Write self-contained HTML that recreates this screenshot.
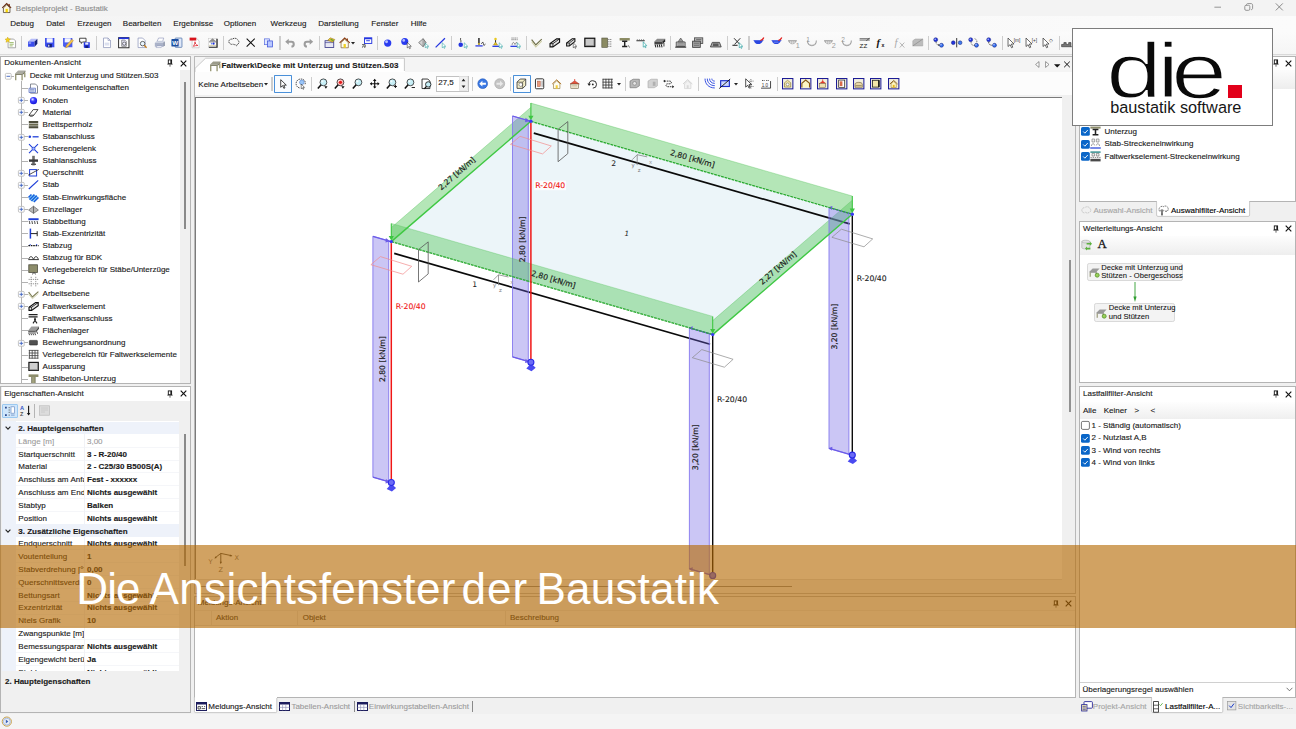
<!DOCTYPE html><html lang='de'><head><meta charset='utf-8'><title>Beispielprojekt - Baustatik</title><style>
*{box-sizing:border-box;margin:0;padding:0}
html,body{width:1296px;height:729px;overflow:hidden;background:#f0f0f0}
body{font-family:"Liberation Sans",sans-serif;font-size:8px;color:#1a1a1a;position:relative;line-height:1}
.a{position:absolute}
.t{position:absolute;white-space:nowrap;line-height:10px;height:10px;-webkit-text-stroke:.13px}
.b{font-weight:700}
.g{color:#9a9a9a;-webkit-text-stroke:.1px}
.pn{position:absolute;background:#fff;border:1px solid #b4b4b4}
.hd{position:absolute;left:0;right:0;top:0;height:14px;background:#fff}
svg{position:absolute;overflow:visible}
</style></head><body>
<div class='a' style='left:0px;top:0px;width:1296px;height:15.5px;background:#f3f3f3;'></div>
<svg style='left:2.4px;top:2.6px' width='9.4' height='10.3' viewBox='0 0 10 11'><path d='M0.3 5.2L5 0.6l4.7 4.6' fill='none' stroke='#6a2d10' stroke-width='1.2'/><path d='M1.5 5.2L5 1.9l3.5 3.3v5h-7z' fill='#fdf6dc' stroke='#4a3a2a' stroke-width='.8'/><rect x='3.8' y='6.3' width='2.4' height='3.6' fill='#f5d400'/><rect x='7' y='1' width='1.3' height='2.4' fill='#7a2d10'/></svg>
<div class='t ' style='left:15.8px;top:3.65px;color:#8e8e8e'>Beispielprojekt - Baustatik</div>
<svg style='left:1210px;top:3px' width='80' height='10' viewBox='0 0 80 10'><path d='M4.400 4.200h6.600' stroke='#8a8a8a' stroke-width='.9'/><rect x='34.800' y='2.300' width='5' height='5' rx='1.200' fill='none' stroke='#8a8a8a' stroke-width='.9'/><path d='M36.400 2.200c0-1.200.6-1.600 1.600-1.600h3c1 0 1.600.6 1.600 1.600v3c0 1-.6 1.400-1.600 1.500' fill='none' stroke='#8a8a8a' stroke-width='.9'/><path d='M65.800 .4l7 7M72.800 .4l-7 7' stroke='#777' stroke-width='.85'/></svg>
<div class='a' style='left:0px;top:15.5px;width:1296px;height:16.5px;background:linear-gradient(90deg,#f4f4f4,#fbfbfb);'></div>
<div class='t ' style='left:10.3px;top:18.95px;'>Debug</div>
<div class='t ' style='left:46.2px;top:18.95px;'>Datei</div>
<div class='t ' style='left:77.3px;top:18.95px;'>Erzeugen</div>
<div class='t ' style='left:122.8px;top:18.95px;'>Bearbeiten</div>
<div class='t ' style='left:173.3px;top:18.95px;'>Ergebnisse</div>
<div class='t ' style='left:223.8px;top:18.95px;'>Optionen</div>
<div class='t ' style='left:270.5px;top:18.95px;'>Werkzeug</div>
<div class='t ' style='left:318.3px;top:18.95px;'>Darstellung</div>
<div class='t ' style='left:371.3px;top:18.95px;'>Fenster</div>
<div class='t ' style='left:410.7px;top:18.95px;'>Hilfe</div>
<div class='a' style='left:0px;top:32px;width:1296px;height:23px;background:linear-gradient(#fbfbfb,#f5f5f5);'></div>
<div class='a' style='left:0px;top:54.2px;width:1296px;height:0.9px;background:#d9d9d9;'></div>
<div class='a' style='left:0px;top:714px;width:1296px;height:15px;background:#f4f4f4;'></div>
<div class='pn' style='left:0px;top:55.5px;width:191px;height:328px'></div>
<div class='t ' style='left:4.2px;top:58.25px;letter-spacing:.15px'>Dokumenten-Ansicht</div>
<svg style='left:167.30px;top:59.30px' width='6' height='8' viewBox='0 0 6 8'><rect x='1.300' y='.9' width='3.300' height='3.800' fill='#fff' stroke='#111' stroke-width='.9'/><path d='M4 1v3.600' stroke='#111' stroke-width='1.200'/><path d='M.3 5.200h5.400' stroke='#444' stroke-width='.8'/><path d='M3 5.400v2.300' stroke='#555' stroke-width='.9'/></svg>
<svg style='left:179.90px;top:59.60px' width='7' height='7' viewBox='0 0 7 7'><path d='M.7 .7l5.600 5.600M6.300 .7L.7 6.300' stroke='#111' stroke-width='1.150' fill='none'/></svg>
<div class='a' style='left:179.5px;top:70px;width:10.5px;height:312.5px;background:#f0f0f0;'></div>
<div class='a' style='left:184.3px;top:81.5px;width:1.8px;height:147px;background:#8a8a8a;'></div>
<div class='a' style='left:1.5px;top:69px;width:178px;height:313.5px;overflow:hidden'><div class='a' style='left:-1.5px;top:-69px;width:200px;height:400px'>
<svg style='left:0;top:0' width='60' height='400' viewBox='0 0 60 400'><path d='M21.5 80.9V395' stroke='#b2b2b2' stroke-width='1'/>
<path d='M21.5 88.5H28' stroke='#b2b2b2' stroke-width='1'/>
<path d='M21.5 100.5H28' stroke='#b2b2b2' stroke-width='1'/>
<path d='M21.5 112.5H28' stroke='#b2b2b2' stroke-width='1'/>
<path d='M21.5 124.5H28' stroke='#b2b2b2' stroke-width='1'/>
<path d='M21.5 136.5H28' stroke='#b2b2b2' stroke-width='1'/>
<path d='M21.5 149.5H28' stroke='#b2b2b2' stroke-width='1'/>
<path d='M21.5 161.5H28' stroke='#b2b2b2' stroke-width='1'/>
<path d='M21.5 173.5H28' stroke='#b2b2b2' stroke-width='1'/>
<path d='M21.5 185.5H28' stroke='#b2b2b2' stroke-width='1'/>
<path d='M21.5 197.5H28' stroke='#b2b2b2' stroke-width='1'/>
<path d='M21.5 209.5H28' stroke='#b2b2b2' stroke-width='1'/>
<path d='M21.5 221.5H28' stroke='#b2b2b2' stroke-width='1'/>
<path d='M21.5 233.5H28' stroke='#b2b2b2' stroke-width='1'/>
<path d='M21.5 246.5H28' stroke='#b2b2b2' stroke-width='1'/>
<path d='M21.5 258.5H28' stroke='#b2b2b2' stroke-width='1'/>
<path d='M21.5 270.5H28' stroke='#b2b2b2' stroke-width='1'/>
<path d='M21.5 282.5H28' stroke='#b2b2b2' stroke-width='1'/>
<path d='M21.5 294.5H28' stroke='#b2b2b2' stroke-width='1'/>
<path d='M21.5 306.5H28' stroke='#b2b2b2' stroke-width='1'/>
<path d='M21.5 318.5H28' stroke='#b2b2b2' stroke-width='1'/>
<path d='M21.5 330.5H28' stroke='#b2b2b2' stroke-width='1'/>
<path d='M21.5 342.5H28' stroke='#b2b2b2' stroke-width='1'/>
<path d='M21.5 355.5H28' stroke='#b2b2b2' stroke-width='1'/>
<path d='M21.5 367.5H28' stroke='#b2b2b2' stroke-width='1'/>
<path d='M21.5 379.5H28' stroke='#b2b2b2' stroke-width='1'/>
<path d='M11 76.5H14' stroke='#b2b2b2' stroke-width='1'/></svg>
<svg style='left:4.90px;top:73.20px' width='6.6' height='6.6' viewBox='0 0 6.6 6.6'><rect x='.4' y='.4' width='5.800' height='5.800' rx='1' fill='#fff' stroke='#b0b0b0' stroke-width='.75'/><path d='M1.500 3.300h3.600' stroke='#3a5fc0' stroke-width='.9'/></svg>
<svg style='left:13.60px;top:69.30px' width='12' height='12' viewBox='0 0 11 11'><path d='M1 4.2L3.8 1.4H10.4L8 4.2z' fill='#ababa2'/><path d='M1 4.2H8V5.4H1z' fill='#77775f'/><path d='M8 4.2L10.4 1.4V2.6L8 5.4z' fill='#5f5f4c'/><path d='M1.6 5.4V10.2M7.4 5.4V10.2M9.9 3.2V7.6' stroke='#8a8a62' stroke-width='1.1'/></svg>
<div class='t ' style='left:29.7px;top:71.35px;letter-spacing:-.09px'>Decke mit Unterzug und Stützen.S03</div>
<svg style='left:28.10px;top:82.52px' width='11' height='11' viewBox='0 0 11 11'><path d='M2.5 1h5l2 2v7.2h-7z' fill='#fff' stroke='#6a6f7a' stroke-width='.8'/><path d='M1 5.2h6.5v4.3H1z' fill='#dfe6f6' stroke='#5a6fc0' stroke-width='.75'/><path d='M2 6.6h4.4M2 8h4.4' stroke='#5a6fb0' stroke-width='.6'/></svg>
<div class='t ' style='left:42.6px;top:83.47px;'>Dokumenteigenschaften</div>
<svg style='left:18.00px;top:97.24px' width='6.6' height='6.6' viewBox='0 0 6.6 6.6'><rect x='.4' y='.4' width='5.800' height='5.800' rx='1' fill='#fff' stroke='#b0b0b0' stroke-width='.75'/><path d='M1.500 3.300h3.600M3.300 1.500v3.600' stroke='#3a5fc0' stroke-width='.9'/></svg>
<svg style='left:28.10px;top:94.64px' width='11' height='11' viewBox='0 0 11 11'><defs><radialGradient id='kg' cx='.38' cy='.32' r='.7'><stop offset='0' stop-color='#e6e9ff'/><stop offset='.4' stop-color='#3c40ff'/><stop offset='1' stop-color='#1414d8'/></radialGradient></defs><circle cx='5.5' cy='5.7' r='3.6' fill='url(#kg)'/></svg>
<div class='t ' style='left:42.6px;top:95.59px;'>Knoten</div>
<svg style='left:18.00px;top:109.35px' width='6.6' height='6.6' viewBox='0 0 6.6 6.6'><rect x='.4' y='.4' width='5.800' height='5.800' rx='1' fill='#fff' stroke='#b0b0b0' stroke-width='.75'/><path d='M1.500 3.300h3.600M3.300 1.500v3.600' stroke='#3a5fc0' stroke-width='.9'/></svg>
<svg style='left:28.10px;top:106.75px' width='11' height='11' viewBox='0 0 11 11'><path d='M1 8.2L5.2 2.6H10L5.8 8.2z' fill='#fff' stroke='#222' stroke-width='.8'/><path d='M1 8.2c.4 1.4 3.6 1.6 4.8 0' fill='none' stroke='#222' stroke-width='.8'/></svg>
<div class='t ' style='left:42.6px;top:107.70px;'>Material</div>
<svg style='left:28.10px;top:118.87px' width='11' height='11' viewBox='0 0 11 11'><rect x='.8' y='2' width='9.4' height='2.1' fill='#4e4e3c'/><rect x='.8' y='4.6' width='9.4' height='2.1' fill='#6a6a50'/><rect x='.8' y='7.2' width='9.4' height='2.1' fill='#4e4e3c'/></svg>
<div class='t ' style='left:42.6px;top:119.82px;'>Brettsperrholz</div>
<svg style='left:18.00px;top:133.59px' width='6.6' height='6.6' viewBox='0 0 6.6 6.6'><rect x='.4' y='.4' width='5.800' height='5.800' rx='1' fill='#fff' stroke='#b0b0b0' stroke-width='.75'/><path d='M1.500 3.300h3.600M3.300 1.500v3.600' stroke='#3a5fc0' stroke-width='.9'/></svg>
<svg style='left:28.10px;top:130.99px' width='11' height='11' viewBox='0 0 11 11'><circle cx='1.8' cy='5.8' r='1.3' fill='#1f3fd8'/><path d='M4.6 5.8h6' stroke='#1f3fd8' stroke-width='1.3'/></svg>
<div class='t ' style='left:42.6px;top:131.94px;'>Stabanschluss</div>
<svg style='left:28.10px;top:143.11px' width='11' height='11' viewBox='0 0 11 11'><path d='M1 1.2l9 9M10 1.2l-9 9' stroke='#1f3fd8' stroke-width='1.1'/><circle cx='5.5' cy='5.7' r='1.5' fill='#9db2ff' stroke='#1f3fd8' stroke-width='.6'/></svg>
<div class='t ' style='left:42.6px;top:144.06px;'>Scherengelenk</div>
<svg style='left:28.10px;top:155.23px' width='11' height='11' viewBox='0 0 11 11'><rect x='4.2' y='.8' width='2.6' height='9.6' fill='#6d6d6d'/><rect x='1' y='4.4' width='9' height='2.4' fill='#3a3a3a'/><rect x='3' y='8.6' width='5' height='1.4' fill='#555'/></svg>
<div class='t ' style='left:42.6px;top:156.18px;'>Stahlanschluss</div>
<svg style='left:18.00px;top:169.94px' width='6.6' height='6.6' viewBox='0 0 6.6 6.6'><rect x='.4' y='.4' width='5.800' height='5.800' rx='1' fill='#fff' stroke='#b0b0b0' stroke-width='.75'/><path d='M1.500 3.300h3.600M3.300 1.500v3.600' stroke='#3a5fc0' stroke-width='.9'/></svg>
<svg style='left:28.10px;top:167.34px' width='11' height='11' viewBox='0 0 11 11'><rect x='1.6' y='2.6' width='7' height='6.4' fill='#fff' stroke='#1f3fd8' stroke-width='1'/><path d='M.2 8.2L10.8 2.4' stroke='#222' stroke-width='.8'/></svg>
<div class='t ' style='left:42.6px;top:168.29px;'>Querschnitt</div>
<svg style='left:18.00px;top:182.06px' width='6.6' height='6.6' viewBox='0 0 6.6 6.6'><rect x='.4' y='.4' width='5.800' height='5.800' rx='1' fill='#fff' stroke='#b0b0b0' stroke-width='.75'/><path d='M1.500 3.300h3.600M3.300 1.500v3.600' stroke='#3a5fc0' stroke-width='.9'/></svg>
<svg style='left:28.10px;top:179.46px' width='11' height='11' viewBox='0 0 11 11'><path d='M.8 10L10.2 1.4' stroke='#1f3fd8' stroke-width='1.2'/></svg>
<div class='t ' style='left:42.6px;top:180.41px;'>Stab</div>
<svg style='left:28.10px;top:191.58px' width='11' height='11' viewBox='0 0 11 11'><path d='M.5 5.5l3-3M1.5 7.6l5-5M3.4 9l5.4-5.4M5.8 10l4.6-4.6' stroke='#1a5fe0' stroke-width='1.7'/><path d='M1 6.6l4-4M2.6 8.4l5-5M4.6 9.6l5-5' stroke='#35c3e8' stroke-width='.6'/></svg>
<div class='t ' style='left:42.6px;top:192.53px;'>Stab-Einwirkungsfläche</div>
<svg style='left:18.00px;top:206.30px' width='6.6' height='6.6' viewBox='0 0 6.6 6.6'><rect x='.4' y='.4' width='5.800' height='5.800' rx='1' fill='#fff' stroke='#b0b0b0' stroke-width='.75'/><path d='M1.500 3.300h3.600M3.300 1.500v3.600' stroke='#3a5fc0' stroke-width='.9'/></svg>
<svg style='left:28.10px;top:203.70px' width='11' height='11' viewBox='0 0 11 11'><path d='M.6 6L5.5 2.2 10.4 6 5.5 9.4z' fill='#b9b9b9' stroke='#666' stroke-width='.7'/><path d='M5.5 2.2V9.4' stroke='#555' stroke-width='.8'/></svg>
<div class='t ' style='left:42.6px;top:204.65px;'>Einzellager</div>
<svg style='left:28.10px;top:215.82px' width='11' height='11' viewBox='0 0 11 11'><path d='M.4 3.2h10.2' stroke='#1f3fd8' stroke-width='1.9'/><path d='M1.6 5c-1 1.2 1 1.6 0 3M4.2 5c-1 1.2 1 1.6 0 3M6.8 5c-1 1.2 1 1.6 0 3M9.4 5c-1 1.2 1 1.6 0 3' fill='none' stroke='#222' stroke-width='.9'/></svg>
<div class='t ' style='left:42.6px;top:216.77px;'>Stabbettung</div>
<svg style='left:28.10px;top:227.93px' width='11' height='11' viewBox='0 0 11 11'><path d='M2.4 .6v10' stroke='#1f3fd8' stroke-width='1.5'/><path d='M2.8 5.6h6.4M9.2 3.2v5' stroke='#222' stroke-width='1'/></svg>
<div class='t ' style='left:42.6px;top:228.88px;'>Stab-Exzentrizität</div>
<svg style='left:28.10px;top:240.05px' width='11' height='11' viewBox='0 0 11 11'><path d='M.4 5.6h10.2' stroke='#111' stroke-width='1.3' stroke-dasharray='1.6 .8'/><path d='M2.2 4.2v1M8.6 4.2v1' stroke='#1f3fd8' stroke-width='1.2'/></svg>
<div class='t ' style='left:42.6px;top:241.00px;'>Stabzug</div>
<svg style='left:28.10px;top:252.17px' width='11' height='11' viewBox='0 0 11 11'><path d='M.8 7.4c.4-3.6 4-3.6 4.4 0M5.8 7.4c.4-3.6 4-3.6 4.4 0M.4 7.6h10.4' fill='none' stroke='#222' stroke-width='.9'/></svg>
<div class='t ' style='left:42.6px;top:253.12px;'>Stabzug für BDK</div>
<svg style='left:28.10px;top:264.29px' width='11' height='11' viewBox='0 0 11 11'><rect x='.8' y='.8' width='8.6' height='7.6' fill='#8c8c6a' stroke='#4a4a3a' stroke-width='.8'/><path d='M4 10.4l2-1.8 2 1.8' fill='none' stroke='#333' stroke-width='.8'/></svg>
<div class='t ' style='left:42.6px;top:265.24px;'>Verlegebereich für Stäbe/Unterzüge</div>
<svg style='left:28.10px;top:276.41px' width='11' height='11' viewBox='0 0 11 11'><path d='M3.2 .8v9.6M7.8 .8v9.6M.6 3.4h9.8M.6 7.8h9.8' stroke='#8a8a8a' stroke-width='.9' stroke-dasharray='1.2 .9'/></svg>
<div class='t ' style='left:42.6px;top:277.36px;'>Achse</div>
<svg style='left:18.00px;top:291.12px' width='6.6' height='6.6' viewBox='0 0 6.6 6.6'><rect x='.4' y='.4' width='5.800' height='5.800' rx='1' fill='#fff' stroke='#b0b0b0' stroke-width='.75'/><path d='M1.500 3.300h3.600M3.300 1.500v3.600' stroke='#3a5fc0' stroke-width='.9'/></svg>
<svg style='left:28.10px;top:288.52px' width='11' height='11' viewBox='0 0 11 11'><path d='M.6 3.2L4.4 8 10.4 2.6' fill='none' stroke='#7d7d55' stroke-width='1.2'/><path d='M.6 5L4.4 9.8 10.4 4.4' fill='none' stroke='#c9c9a4' stroke-width='.9'/></svg>
<div class='t ' style='left:42.6px;top:289.47px;'>Arbeitsebene</div>
<svg style='left:18.00px;top:303.24px' width='6.6' height='6.6' viewBox='0 0 6.6 6.6'><rect x='.4' y='.4' width='5.800' height='5.800' rx='1' fill='#fff' stroke='#b0b0b0' stroke-width='.75'/><path d='M1.500 3.300h3.600M3.300 1.500v3.600' stroke='#3a5fc0' stroke-width='.9'/></svg>
<svg style='left:28.10px;top:300.64px' width='11' height='11' viewBox='0 0 11 11'><path d='M1 9.4V6.2L7.6 1.6h2.6V4.8L3.6 9.4z' fill='#e9e9e9' stroke='#111' stroke-width='1.1'/><path d='M1 6.2h2.6V9.4M3.6 6.2L10.2 1.6' fill='none' stroke='#111' stroke-width='.8'/></svg>
<div class='t ' style='left:42.6px;top:301.59px;'>Faltwerkselement</div>
<svg style='left:28.10px;top:312.76px' width='11' height='11' viewBox='0 0 11 11'><path d='M.6 1.6h9M.6 3.8h9' stroke='#222' stroke-width='1.2'/><path d='M7 4.4v3M5 10.4l2-3 2 3' fill='none' stroke='#222' stroke-width='1.1'/><circle cx='7' cy='6.6' r='1' fill='#222'/></svg>
<div class='t ' style='left:42.6px;top:313.71px;'>Faltwerksanschluss</div>
<svg style='left:28.10px;top:324.88px' width='11' height='11' viewBox='0 0 11 11'><path d='M.2 5.4L3.4 1.6H11L7.8 5.4z' fill='#9d9d9d'/><path d='M.2 5.4H7.8V7.6H.2z' fill='#666'/><path d='M7.8 5.4L11 1.600V3.800L7.8 7.600z' fill='#4a4a4a'/><path d='M.8 8l.8 2.200M2.800 8l.8 2.200M4.800 8l.8 2.200M6.800 8l.8 2.200M8.800 6.600l.8 2.200' stroke='#333' stroke-width='.9'/></svg>
<div class='t ' style='left:42.6px;top:325.83px;'>Flächenlager</div>
<svg style='left:18.00px;top:339.60px' width='6.6' height='6.6' viewBox='0 0 6.6 6.6'><rect x='.4' y='.4' width='5.800' height='5.800' rx='1' fill='#fff' stroke='#b0b0b0' stroke-width='.75'/><path d='M1.500 3.300h3.600M3.300 1.500v3.600' stroke='#3a5fc0' stroke-width='.9'/></svg>
<svg style='left:28.10px;top:337.00px' width='11' height='11' viewBox='0 0 11 11'><rect x='1.4' y='3.4' width='8' height='4.6' rx='.6' fill='#505050' stroke='#2a2a2a' stroke-width='.6'/></svg>
<div class='t ' style='left:42.6px;top:337.95px;'>Bewehrungsanordnung</div>
<svg style='left:28.10px;top:349.11px' width='11' height='11' viewBox='0 0 11 11'><path d='M.8 1.4h9.6M.8 4h9.6M.8 6.6h9.6M.8 9.2h9.6M1.4 1v8.6M4.2 1v8.6M7 1v8.6M9.8 1v8.6' stroke='#4a4a4a' stroke-width='.85'/></svg>
<div class='t ' style='left:42.6px;top:350.06px;'>Verlegebereich für Faltwerkselemente</div>
<svg style='left:28.10px;top:361.23px' width='11' height='11' viewBox='0 0 11 11'><rect x='.9' y='1.4' width='9.4' height='8' fill='#cfcfcf' stroke='#1a1a1a' stroke-width='1.2'/><path d='M1.6 8.8L9.6 8.8 9.6 2.2' fill='none' stroke='#888' stroke-width='.7'/></svg>
<div class='t ' style='left:42.6px;top:362.18px;'>Aussparung</div>
<svg style='left:28.10px;top:373.35px' width='11' height='11' viewBox='0 0 11 11'><rect x='.6' y='1.4' width='9.8' height='2.6' fill='#8c8c6a'/><rect x='3.6' y='4' width='3.6' height='6.4' fill='#a2a27e'/><path d='M3.6 4v6.4M7.2 4v6.4' stroke='#55553f' stroke-width='.6'/></svg>
<div class='t ' style='left:42.6px;top:374.30px;'>Stahlbeton-Unterzug</div>
</div></div>
<div class='pn' style='left:0px;top:386px;width:191px;height:327px;background:#f0f0f0'></div>
<div class='a' style='left:1.5px;top:387px;width:188.5px;height:14px;background:#fff;'></div>
<div class='t ' style='left:4.2px;top:389.05px;'>Eigenschaften-Ansicht</div>
<svg style='left:167.30px;top:390.10px' width='6' height='8' viewBox='0 0 6 8'><rect x='1.300' y='.9' width='3.300' height='3.800' fill='#fff' stroke='#111' stroke-width='.9'/><path d='M4 1v3.600' stroke='#111' stroke-width='1.200'/><path d='M.3 5.200h5.400' stroke='#444' stroke-width='.8'/><path d='M3 5.400v2.300' stroke='#555' stroke-width='.9'/></svg>
<svg style='left:179.90px;top:390.40px' width='7' height='7' viewBox='0 0 7 7'><path d='M.7 .7l5.600 5.600M6.300 .7L.7 6.300' stroke='#111' stroke-width='1.150' fill='none'/></svg>
<div class='a' style='left:1.5px;top:401px;width:188.5px;height:20px;background:#f0f0f0;'></div>
<div class='a' style='left:2px;top:404px;width:15.5px;height:13.5px;background:#cfe6fb;border:.6px solid #9cc9f0;border-radius:1px'></div>
<svg style='left:4px;top:405.5px' width='12' height='11' viewBox='0 0 12 11'><path d='M1 .8h1.8v1.8H1zM1 8.2h1.8V10H1z' fill='#2b4a8f'/><path d='M4.6 1.7h1.2M4.6 4h1.2M4.6 6.3h1.2M4.6 9.1h1.2' stroke='#444' stroke-width='.8'/><rect x='7' y='.8' width='3.6' height='6.4' fill='#fff' stroke='#6d8fc4' stroke-width='.7'/><path d='M7 9.1h3.6' stroke='#6d8fc4' stroke-width='.8'/></svg>
<svg style='left:19.5px;top:405px' width='12' height='12' viewBox='0 0 12 12'><text x='0' y='5.2' font-family='Liberation Sans' font-size='5.6' fill='#2b55c8' font-weight='700'>A</text><text x='0' y='10.8' font-family='Liberation Sans' font-size='5.6' fill='#555' font-weight='700'>Z</text><path d='M8.6 .8v9' stroke='#111' stroke-width='1.1'/><path d='M6.9 8l1.7 2.6L10.3 8z' fill='#111'/></svg>
<div class='a' style='left:34.2px;top:404px;width:0.8px;height:14px;background:#b5b5b5;'></div>
<svg style='left:39px;top:405px' width='11' height='11' viewBox='0 0 11 11'><rect x='.5' y='.8' width='10' height='9.4' fill='#dcdcdc' stroke='#b9b9b9' stroke-width='.7'/><path d='M2 3h7M2 5h7M2 7h4' stroke='#c6c6c6' stroke-width='.8'/></svg>
<div class='a' style='left:1.5px;top:421px;width:177px;height:250px;overflow:hidden;background:#fff'><div class='a' style='left:-1.5px;top:-421px;width:200px;height:700px'>
<div class='a' style='left:1.5px;top:421px;width:14.5px;height:251px;background:#eef2fa;'></div>
<div class='a' style='left:1.5px;top:421.6px;width:177px;height:12.83px;background:#eef2fa;'></div>
<svg style='left:5px;top:426.22px' width='6' height='4' viewBox='0 0 6 4'><path d='M.6 .6L3 3.2 5.4 .6' fill='none' stroke='#222' stroke-width='1.1'/></svg>
<div class='t b' style='left:18.3px;top:423.87px;'>2. Haupteigenschaften</div>
<div class='a' style='left:16px;top:446.76px;width:162.5px;height:0.6px;background:#f5f6f9;'></div>
<div class='a' style='left:84px;top:434.43px;width:0.6px;height:12.83px;background:#f1f2f6;'></div>
<div class='a' style='left:16px;top:434.43px;width:68px;height:12.83px;overflow:hidden'><div class='t g' style='letter-spacing:.04px;left:2.3px;top:2.27px'>Länge [m]</div></div>
<div class='t g' style='left:87px;top:436.69px;'>3,00</div>
<div class='a' style='left:16px;top:459.59000000000003px;width:162.5px;height:0.6px;background:#f5f6f9;'></div>
<div class='a' style='left:84px;top:447.26000000000005px;width:0.6px;height:12.83px;background:#f1f2f6;'></div>
<div class='a' style='left:16px;top:447.26px;width:68px;height:12.83px;overflow:hidden'><div class='t' style='letter-spacing:.04px;left:2.3px;top:2.27px'>Startquerschnitt</div></div>
<div class='t b' style='left:87px;top:449.53px;'>3 - R-20/40</div>
<div class='a' style='left:16px;top:472.42px;width:162.5px;height:0.6px;background:#f5f6f9;'></div>
<div class='a' style='left:84px;top:460.09000000000003px;width:0.6px;height:12.83px;background:#f1f2f6;'></div>
<div class='a' style='left:16px;top:460.09px;width:68px;height:12.83px;overflow:hidden'><div class='t' style='letter-spacing:.04px;left:2.3px;top:2.27px'>Material</div></div>
<div class='t b' style='left:87px;top:462.36px;'>2 - C25/30 B500S(A)</div>
<div class='a' style='left:16px;top:485.25px;width:162.5px;height:0.6px;background:#f5f6f9;'></div>
<div class='a' style='left:84px;top:472.92px;width:0.6px;height:12.83px;background:#f1f2f6;'></div>
<div class='a' style='left:16px;top:472.92px;width:68px;height:12.83px;overflow:hidden'><div class='t' style='letter-spacing:.04px;left:2.3px;top:2.27px'>Anschluss am Anfang</div></div>
<div class='t b' style='left:87px;top:475.19px;'>Fest - xxxxxx</div>
<div class='a' style='left:16px;top:498.08px;width:162.5px;height:0.6px;background:#f5f6f9;'></div>
<div class='a' style='left:84px;top:485.75px;width:0.6px;height:12.83px;background:#f1f2f6;'></div>
<div class='a' style='left:16px;top:485.75px;width:68px;height:12.83px;overflow:hidden'><div class='t' style='letter-spacing:.04px;left:2.3px;top:2.27px'>Anschluss am Ende</div></div>
<div class='t b' style='left:87px;top:488.01px;'>Nichts ausgewählt</div>
<div class='a' style='left:16px;top:510.91px;width:162.5px;height:0.6px;background:#f5f6f9;'></div>
<div class='a' style='left:84px;top:498.58000000000004px;width:0.6px;height:12.83px;background:#f1f2f6;'></div>
<div class='a' style='left:16px;top:498.58px;width:68px;height:12.83px;overflow:hidden'><div class='t' style='letter-spacing:.04px;left:2.3px;top:2.27px'>Stabtyp</div></div>
<div class='t b' style='left:87px;top:500.85px;'>Balken</div>
<div class='a' style='left:16px;top:523.74px;width:162.5px;height:0.6px;background:#f5f6f9;'></div>
<div class='a' style='left:84px;top:511.41px;width:0.6px;height:12.83px;background:#f1f2f6;'></div>
<div class='a' style='left:16px;top:511.41px;width:68px;height:12.83px;overflow:hidden'><div class='t' style='letter-spacing:.04px;left:2.3px;top:2.27px'>Position</div></div>
<div class='t b' style='left:87px;top:513.68px;'>Nichts ausgewählt</div>
<div class='a' style='left:1.5px;top:524.24px;width:177px;height:12.83px;background:#eef2fa;'></div>
<svg style='left:5px;top:528.86px' width='6' height='4' viewBox='0 0 6 4'><path d='M.6 .6L3 3.2 5.4 .6' fill='none' stroke='#222' stroke-width='1.1'/></svg>
<div class='t b' style='left:18.3px;top:526.50px;'>3. Zusätzliche Eigenschaften</div>
<div class='a' style='left:16px;top:549.4000000000001px;width:162.5px;height:0.6px;background:#f5f6f9;'></div>
<div class='a' style='left:84px;top:537.07px;width:0.6px;height:12.83px;background:#f1f2f6;'></div>
<div class='a' style='left:16px;top:537.07px;width:68px;height:12.83px;overflow:hidden'><div class='t' style='letter-spacing:.04px;left:2.3px;top:2.27px'>Endquerschnitt</div></div>
<div class='t b' style='left:87px;top:539.34px;'>Nichts ausgewählt</div>
<div class='a' style='left:16px;top:562.2300000000001px;width:162.5px;height:0.6px;background:#f5f6f9;'></div>
<div class='a' style='left:84px;top:549.9000000000001px;width:0.6px;height:12.83px;background:#f1f2f6;'></div>
<div class='a' style='left:16px;top:549.90px;width:68px;height:12.83px;overflow:hidden'><div class='t' style='letter-spacing:.04px;left:2.3px;top:2.27px'>Voutenteilung</div></div>
<div class='t b' style='left:87px;top:552.17px;'>1</div>
<div class='a' style='left:16px;top:575.0600000000001px;width:162.5px;height:0.6px;background:#f5f6f9;'></div>
<div class='a' style='left:84px;top:562.73px;width:0.6px;height:12.83px;background:#f1f2f6;'></div>
<div class='a' style='left:16px;top:562.73px;width:68px;height:12.83px;overflow:hidden'><div class='t' style='letter-spacing:.04px;left:2.3px;top:2.27px'>Stabverdrehung [°]</div></div>
<div class='t b' style='left:87px;top:565.00px;'>0,00</div>
<div class='a' style='left:16px;top:587.8900000000001px;width:162.5px;height:0.6px;background:#f5f6f9;'></div>
<div class='a' style='left:84px;top:575.5600000000001px;width:0.6px;height:12.83px;background:#f1f2f6;'></div>
<div class='a' style='left:16px;top:575.56px;width:68px;height:12.83px;overflow:hidden'><div class='t' style='letter-spacing:.04px;left:2.3px;top:2.27px'>Querschnittsverdrehung</div></div>
<div class='t b' style='left:87px;top:577.83px;'>0</div>
<div class='a' style='left:16px;top:600.72px;width:162.5px;height:0.6px;background:#f5f6f9;'></div>
<div class='a' style='left:84px;top:588.39px;width:0.6px;height:12.83px;background:#f1f2f6;'></div>
<div class='a' style='left:16px;top:588.39px;width:68px;height:12.83px;overflow:hidden'><div class='t' style='letter-spacing:.04px;left:2.3px;top:2.27px'>Bettungsart</div></div>
<div class='t b' style='left:87px;top:590.65px;'>Nichts ausgewählt</div>
<div class='a' style='left:16px;top:613.5500000000001px;width:162.5px;height:0.6px;background:#f5f6f9;'></div>
<div class='a' style='left:84px;top:601.22px;width:0.6px;height:12.83px;background:#f1f2f6;'></div>
<div class='a' style='left:16px;top:601.22px;width:68px;height:12.83px;overflow:hidden'><div class='t' style='letter-spacing:.04px;left:2.3px;top:2.27px'>Exzentrizität</div></div>
<div class='t b' style='left:87px;top:603.49px;'>Nichts ausgewählt</div>
<div class='a' style='left:16px;top:626.38px;width:162.5px;height:0.6px;background:#f5f6f9;'></div>
<div class='a' style='left:84px;top:614.05px;width:0.6px;height:12.83px;background:#f1f2f6;'></div>
<div class='a' style='left:16px;top:614.05px;width:68px;height:12.83px;overflow:hidden'><div class='t' style='letter-spacing:.04px;left:2.3px;top:2.27px'>Ntels Grafik</div></div>
<div class='t b' style='left:87px;top:616.31px;'>10</div>
<div class='a' style='left:16px;top:639.21px;width:162.5px;height:0.6px;background:#f5f6f9;'></div>
<div class='a' style='left:84px;top:626.88px;width:0.6px;height:12.83px;background:#f1f2f6;'></div>
<div class='a' style='left:16px;top:626.88px;width:68px;height:12.83px;overflow:hidden'><div class='t' style='letter-spacing:.04px;left:2.3px;top:2.27px'>Zwangspunkte [m]</div></div>
<div class='a' style='left:16px;top:652.0400000000001px;width:162.5px;height:0.6px;background:#f5f6f9;'></div>
<div class='a' style='left:84px;top:639.71px;width:0.6px;height:12.83px;background:#f1f2f6;'></div>
<div class='a' style='left:16px;top:639.71px;width:68px;height:12.83px;overflow:hidden'><div class='t' style='letter-spacing:.04px;left:2.3px;top:2.27px'>Bemessungsparameter</div></div>
<div class='t b' style='left:87px;top:641.98px;'>Nichts ausgewählt</div>
<div class='a' style='left:16px;top:664.87px;width:162.5px;height:0.6px;background:#f5f6f9;'></div>
<div class='a' style='left:84px;top:652.54px;width:0.6px;height:12.83px;background:#f1f2f6;'></div>
<div class='a' style='left:16px;top:652.54px;width:68px;height:12.83px;overflow:hidden'><div class='t' style='letter-spacing:.04px;left:2.3px;top:2.27px'>Eigengewicht berücksichtigen</div></div>
<div class='t b' style='left:87px;top:654.80px;'>Ja</div>
<div class='a' style='left:16px;top:677.7px;width:162.5px;height:0.6px;background:#f5f6f9;'></div>
<div class='a' style='left:84px;top:665.37px;width:0.6px;height:12.83px;background:#f1f2f6;'></div>
<div class='a' style='left:16px;top:665.37px;width:68px;height:12.83px;overflow:hidden'><div class='t' style='letter-spacing:.04px;left:2.3px;top:2.27px'>Stabkennung</div></div>
<div class='t b' style='left:87px;top:667.63px;'>Nichts ausgewählt</div>
</div></div>
<div class='a' style='left:178.5px;top:421px;width:11.5px;height:250px;background:#f0f0f0;'></div>
<div class='a' style='left:183.8px;top:433.5px;width:1.8px;height:132.5px;background:#8a8a8a;'></div>
<div class='t b' style='left:5px;top:676.65px;'>2. Haupteigenschaften</div>
<svg style='left:.5px;top:716px' width='12' height='12' viewBox='0 0 12 12'><circle cx='5.8' cy='5.6' r='4.6' fill='#e9eef7' stroke='#c9a24a' stroke-width='1'/><circle cx='5.8' cy='5.6' r='3.4' fill='none' stroke='#8ea7d8' stroke-width='.7'/><path d='M4.8 3.6l2.6 2-2.6 2z' fill='#3c63b8'/></svg>
<div class='a' style='left:194px;top:55.5px;width:882px;height:538px;background:#f0f0f0;border:1px solid #b9b9b9'></div>
<div class='a' style='left:195px;top:56.5px;width:880px;height:15.5px;background:#f4f4f4;'></div>
<svg style='left:195px;top:56.5px' width='220' height='16' viewBox='0 0 220 16'><path d='M0 15.6V11.4L10.6 1.2H209.4V15.6z' fill='#fff' stroke='#b4b4b4' stroke-width='.7'/></svg>
<div class='a' style='left:195px;top:71.6px;width:880px;height:0.8px;background:#c9c9c9;'></div>
<div class='a' style='left:196px;top:71.4px;width:208.8px;height:1.2px;background:#fff;'></div>
<svg style='left:209px;top:59.6px' width='12' height='12' viewBox='0 0 11 11'><path d='M1 4.2L3.8 1.4H10.4L8 4.2z' fill='#9b9b8a'/><path d='M1 4.2H8V5.4H1z' fill='#77775f'/><path d='M8 4.2L10.4 1.4V2.6L8 5.4z' fill='#5f5f4c'/><path d='M1.6 5.4V10.2M7.4 5.4V10.2M9.9 3.2V7.6' stroke='#8a8a62' stroke-width='1.1'/></svg>
<div class='t b' style='left:221.6px;top:60.85px;letter-spacing:.07px'>Faltwerk\Decke mit Unterzug und Stützen.S03</div>
<svg style='left:1032px;top:60px' width='42' height='9' viewBox='0 0 42 9'><path d='M7 1.6L3.6 4.5 7 7.4z' fill='#fff' stroke='#555' stroke-width='.6'/><path d='M13.6 1.6L17 4.5 13.6 7.4z' fill='#fff' stroke='#555' stroke-width='.6'/><path d='M22 4.2h6.4l-3.2 3.2z' fill='#111'/><path d='M32.2 1.6l5.6 5.6M37.8 1.6l-5.6 5.6' stroke='#111' stroke-width='1'/></svg>
<div class='a' style='left:195px;top:72.4px;width:880px;height:23px;background:#fcfcfc;'></div>
<div class='t ' style='left:198.3px;top:79.85px;'>Keine Arbeitseben</div>
<div class='a' style='left:195px;top:96.5px;width:867px;height:482px;background:#fff;border-left:1.5px solid #7b7b7b;border-top:1.5px solid #7b7b7b;overflow:hidden'><div class='a' style='left:-196.5px;top:-98px;width:1296px;height:729px'>
<svg style='left:0;top:0' width='1296' height='729' viewBox='0 0 1296 729'><polygon points='391.3,241.6 530.9,121.3 852.3,214.2 712.7,334.6' fill='#ecf5f9'/><path d='M394.2 253.4L710.1 344.2' stroke='#0a0a0a' stroke-width='1.7'/><path d='M533.8 133.1L849.7 223.9' stroke='#0a0a0a' stroke-width='1.7'/><polygon points='530.9,121.3 852.3,214.2 852.3,196.0 530.9,103.1' fill='rgba(92,200,98,.46)'/><path d='M530.9 103.1L852.3 196.0' stroke='rgba(70,190,76,.55)' stroke-width='.6'/><polygon points='391.3,241.6 530.9,121.3 530.9,107.3 391.3,227.6' fill='rgba(92,200,98,.46)'/><path d='M391.3 227.6L530.9 107.3' stroke='rgba(70,190,76,.55)' stroke-width='.6'/><polygon points='712.7,334.6 852.3,214.2 852.3,200.2 712.7,320.6' fill='rgba(92,200,98,.46)'/><path d='M712.7 320.6L852.3 200.2' stroke='rgba(70,190,76,.55)' stroke-width='.6'/><polygon points='528.3,120.5 512.5,116.0 512.5,356.9 528.3,361.4' fill='rgba(112,96,228,.36)' stroke='#8578ee' stroke-width='.9'/><path d='M512.5 116.0L529.7 121.0' stroke='#6c5ce8' stroke-width='1.3'/><path d='M529.7 121.0l-4.2 -3.2l-.4 4.4z' fill='#6c5ce8'/><path d='M512.5 356.9L529.7 361.9' stroke='#6c5ce8' stroke-width='1.3'/><path d='M529.7 361.9l-4.2 -3.2l-.4 4.4z' fill='#6c5ce8'/><polygon points='848.9,213.2 829.0,207.5 829.0,448.4 848.9,454.1' fill='rgba(112,96,228,.36)' stroke='#8578ee' stroke-width='.9'/><path d='M829.0 207.5L851.1 213.9' stroke='#6c5ce8' stroke-width='1.3'/><path d='M828.4 207.3l4 -1.400l-.4 4z' fill='#6c5ce8'/><path d='M829.0 448.4L851.1 454.8' stroke='#6c5ce8' stroke-width='1.3'/><path d='M828.4 448.2l4 -1.400l-.4 4z' fill='#6c5ce8'/><polygon points='391.3,241.6 712.7,334.6 712.7,316.4 391.3,223.4' fill='rgba(92,200,98,.46)'/><path d='M391.3 223.4L712.7 316.4' stroke='rgba(70,190,76,.55)' stroke-width='.6'/><polygon points='388.7,240.8 372.9,236.3 372.9,477.2 388.7,481.7' fill='rgba(112,96,228,.36)' stroke='#8578ee' stroke-width='.9'/><path d='M372.9 236.3L390.1 241.3' stroke='#6c5ce8' stroke-width='1.3'/><path d='M390.1 241.3l-4.2 -3.2l-.4 4.4z' fill='#6c5ce8'/><path d='M372.9 477.2L390.1 482.2' stroke='#6c5ce8' stroke-width='1.3'/><path d='M390.1 482.2l-4.2 -3.2l-.4 4.4z' fill='#6c5ce8'/><polygon points='709.3,333.6 689.4,327.9 689.4,568.8 709.3,574.5' fill='rgba(112,96,228,.36)' stroke='#8578ee' stroke-width='.9'/><path d='M689.4 327.9L711.5 334.3' stroke='#6c5ce8' stroke-width='1.3'/><path d='M688.8 327.7l4 -1.400l-.4 4z' fill='#6c5ce8'/><path d='M689.4 568.8L711.5 575.2' stroke='#6c5ce8' stroke-width='1.3'/><path d='M688.8 568.6l4 -1.400l-.4 4z' fill='#6c5ce8'/><path d='M391.3 241.6L530.9 121.3M712.7 334.6L852.3 214.2' stroke='#3fc843' stroke-width='1.4'/><path d='M391.3 241.6L712.7 334.6M530.9 121.3L852.3 214.2' stroke='#27a82d' stroke-width='1.25' stroke-dasharray='2.8 .8'/><path d='M530.9 122.8V362.2' stroke='#f01616' stroke-width='1.5'/><path d='M391.3 243.1V482.5' stroke='#f01616' stroke-width='1.5'/><path d='M852.3 215.7V455.1' stroke='#0c0c0c' stroke-width='1.4'/><path d='M712.7 336.1V575.5' stroke='#0c0c0c' stroke-width='1.4'/><polygon points='510.5,144.4 520.0,136.3 551.3,146.0 542.6,153.9' fill='none' stroke='#f28b8b' stroke-width='.7'/><polygon points='370.9,264.7 380.4,256.6 411.7,266.3 403.0,274.2' fill='none' stroke='#f28b8b' stroke-width='.7'/><polygon points='831.9,237.3 841.4,229.2 872.7,238.9 864.0,246.8' fill='none' stroke='#8a8a8a' stroke-width='.7'/><polygon points='692.3,357.7 701.8,349.6 733.1,359.3 724.4,367.2' fill='none' stroke='#8a8a8a' stroke-width='.7'/><polygon points='558.1,129.3 567.8,121.6 567.8,153.6 558.1,161.7' fill='none' stroke='#555' stroke-width='.8'/><polygon points='418.5,249.6 428.2,241.9 428.2,273.9 418.5,282.0' fill='none' stroke='#555' stroke-width='.8'/><path d='M530.9 103.1V118.3' stroke='#3cc640' stroke-width='1.1'/><path d='M528.3 115.7h5.2l-2.6 4.6z' fill='#3cc640'/><circle cx='530.9' cy='121.3' r='1.7' fill='#3a3af2'/><path d='M391.3 223.4V238.6' stroke='#3cc640' stroke-width='1.1'/><path d='M388.7 236.0h5.2l-2.6 4.6z' fill='#3cc640'/><circle cx='391.3' cy='241.6' r='1.7' fill='#3a3af2'/><path d='M852.3 196.0V211.2' stroke='#3cc640' stroke-width='1.1'/><path d='M849.6999999999999 208.6h5.2l-2.6 4.6z' fill='#3cc640'/><circle cx='852.3' cy='214.2' r='1.7' fill='#3a3af2'/><path d='M712.7 316.40000000000003V331.6' stroke='#3cc640' stroke-width='1.1'/><path d='M710.1 329.0h5.2l-2.6 4.6z' fill='#3cc640'/><circle cx='712.7' cy='334.6' r='1.7' fill='#3a3af2'/><path d='M526.3 368.6L530.9 363.4L535.7 367.8L531.5 371.2z' fill='#4a4af0'/><circle cx='530.9' cy='362.2' r='3' fill='#6c6cf6' stroke='#2a2ae6' stroke-width='1.1'/><path d='M386.7 488.9L391.3 483.7L396.1 488.1L391.9 491.5z' fill='#4a4af0'/><circle cx='391.3' cy='482.5' r='3' fill='#6c6cf6' stroke='#2a2ae6' stroke-width='1.1'/><path d='M847.7 461.5L852.3 456.3L857.1 460.7L852.9 464.1z' fill='#4a4af0'/><circle cx='852.3' cy='455.1' r='3' fill='#6c6cf6' stroke='#2a2ae6' stroke-width='1.1'/><path d='M708.1 581.9L712.7 576.7L717.5 581.1L713.3 584.5z' fill='#4a4af0'/><circle cx='712.7' cy='575.5' r='3' fill='#6c6cf6' stroke='#2a2ae6' stroke-width='1.1'/><rect x='534.1' y='180.6' width='32' height='9.6' fill='#fff' fill-opacity='.85'/><text x='535.3' y='188.2' font-family="DejaVu Sans" font-size="7.7" fill='#f01616' stroke='#f01616' stroke-width='.12'>R-20/40</text><rect x='394.5' y='300.9' width='32' height='9.6' fill='#fff' fill-opacity='.85'/><text x='395.7' y='308.5' font-family="DejaVu Sans" font-size="7.7" fill='#f01616' stroke='#f01616' stroke-width='.12'>R-20/40</text><rect x='855.5' y='273.5' width='32' height='9.6' fill='#fff' fill-opacity='.85'/><text x='856.7' y='281.1' font-family="DejaVu Sans" font-size="7.7" fill='#222' stroke='#222' stroke-width='.12'>R-20/40</text><rect x='715.9' y='393.9' width='32' height='9.6' fill='#fff' fill-opacity='.85'/><text x='717.1' y='401.5' font-family="DejaVu Sans" font-size="7.7" fill='#222' stroke='#222' stroke-width='.12'>R-20/40</text><text transform='translate(456.7 173.3) rotate(-40.8)' text-anchor='middle' y='2.8' font-family="DejaVu Sans" font-size="7.7" fill='#1c1c1c' stroke='#1c1c1c' stroke-width='.18'>2,27 [kN/m]</text><text transform='translate(777.8 267.8) rotate(-40.8)' text-anchor='middle' y='2.8' font-family="DejaVu Sans" font-size="7.7" fill='#1c1c1c' stroke='#1c1c1c' stroke-width='.18'>2,27 [kN/m]</text><text transform='translate(692.6 158.5) rotate(16.1)' text-anchor='middle' y='2.8' font-family="DejaVu Sans" font-size="7.7" fill='#1c1c1c' stroke='#1c1c1c' stroke-width='.18'>2,80 [kN/m]</text><text transform='translate(553.5 279.2) rotate(16.1)' text-anchor='middle' y='2.8' font-family="DejaVu Sans" font-size="7.7" fill='#1c1c1c' stroke='#1c1c1c' stroke-width='.18'>2,80 [kN/m]</text><text transform='translate(382.2 359.2) rotate(-90)' text-anchor='middle' y='2.8' font-family="DejaVu Sans" font-size="7.7" fill='#1c1c1c' stroke='#1c1c1c' stroke-width='.18'>2,80 [kN/m]</text><text transform='translate(522.2 239.4) rotate(-90)' text-anchor='middle' y='2.8' font-family="DejaVu Sans" font-size="7.7" fill='#1c1c1c' stroke='#1c1c1c' stroke-width='.18'>2,80 [kN/m]</text><text transform='translate(834.6 326.7) rotate(-90)' text-anchor='middle' y='2.8' font-family="DejaVu Sans" font-size="7.7" fill='#1c1c1c' stroke='#1c1c1c' stroke-width='.18'>3,20 [kN/m]</text><text transform='translate(694.7 447.3) rotate(-90)' text-anchor='middle' y='2.8' font-family="DejaVu Sans" font-size="7.7" fill='#1c1c1c' stroke='#1c1c1c' stroke-width='.18'>3,20 [kN/m]</text><text x='472.2' y='286.6' font-family="DejaVu Sans" font-size="7.7" fill='#222'>1</text><text x='611.2' y='166' font-family="DejaVu Sans" font-size="7.7" fill='#222'>2</text><text x='624.4' y='235.8' font-family='DejaVu Sans' font-style='italic' font-size='7.2' fill='#222'>1</text><path d='M498.5 274.8v10.4M498.5 274.8l10 2.2M498.5 274.8l-5 5' fill='none' stroke='#7d7d7d' stroke-width='.75'/><text x='492.9' y='287.0' font-family='DejaVu Sans' font-size='5.4' fill='#7a7a7a'>y</text><text x='499.1' y='291.8' font-family='DejaVu Sans' font-size='5.4' fill='#7a7a7a'>z</text><text x='510.3' y='283.8' font-family='DejaVu Sans' font-size='5.4' fill='#9a9a9a'>x</text><path d='M637.2 154.7v10.4M637.2 154.7l10 2.2M637.2 154.7l-5 5' fill='none' stroke='#7d7d7d' stroke-width='.75'/><text x='631.6' y='166.89999999999998' font-family='DejaVu Sans' font-size='5.4' fill='#7a7a7a'>y</text><text x='637.8000000000001' y='171.7' font-family='DejaVu Sans' font-size='5.4' fill='#7a7a7a'>z</text><text x='649.0' y='163.7' font-family='DejaVu Sans' font-size='5.4' fill='#9a9a9a'>x</text><path d='M220.8 553.4V562.7M220.8 553.4L231.6 555.7M220.8 553.4L215.4 557.6' fill='none' stroke='#3a3a3a' stroke-width='.9'/><path d='M232.6 556l-2.6-1.600-.3 2.100zM220.800 564.200l-1.100-2.400h2.200zM214.400 558.400l2.400-.5-1.300-1.600z' fill='#3a3a3a'/><text x='234.4' y='560' font-family='DejaVu Sans' font-size='6.6' fill='#6a6a6a'>X</text><text x='208.6' y='564.3' font-family='DejaVu Sans' font-size='6.6' fill='#6a6a6a'>Y</text><text x='218.6' y='571.8' font-family='DejaVu Sans' font-size='6.6' fill='#6a6a6a'>Z</text></svg>
</div></div>
<div class='a' style='left:1069px;top:260px;width:1.8px;height:152px;background:#919191;'></div>
<div class='a' style='left:196.5px;top:578.5px;width:865.5px;height:0.6px;background:#dcdcdc;'></div>
<div class='a' style='left:196.5px;top:585.6px;width:595px;height:1.4px;background:#8a8a8a;'></div>
<div class='pn' style='left:193.5px;top:596px;width:882.5px;height:101.5px'></div>
<div class='a' style='left:194.5px;top:597px;width:880.5px;height:13.4px;background:#f0f0f0;'></div>
<div class='t ' style='left:197.8px;top:598.45px;'>Meldungs-Ansicht</div>
<svg style='left:1053.00px;top:599.50px' width='6' height='8' viewBox='0 0 6 8'><rect x='1.300' y='.9' width='3.300' height='3.800' fill='#fff' stroke='#111' stroke-width='.9'/><path d='M4 1v3.600' stroke='#111' stroke-width='1.200'/><path d='M.3 5.200h5.400' stroke='#444' stroke-width='.8'/><path d='M3 5.400v2.300' stroke='#555' stroke-width='.9'/></svg>
<svg style='left:1064.60px;top:599.80px' width='7' height='7' viewBox='0 0 7 7'><path d='M.7 .7l5.600 5.600M6.300 .7L.7 6.300' stroke='#111' stroke-width='1.150' fill='none'/></svg>
<div class='a' style='left:194.5px;top:610.6px;width:880.5px;height:14.6px;background:#f1f1f1;'></div>
<div class='a' style='left:194.5px;top:625px;width:880.5px;height:0.7px;background:#d9d9d9;'></div>
<div class='a' style='left:194.5px;top:610.4px;width:880.5px;height:0.6px;background:#e2e2e2;'></div>
<div class='a' style='left:210.7px;top:611px;width:0.6px;height:14px;background:#dcdcdc;'></div>
<div class='a' style='left:297.3px;top:611px;width:0.6px;height:14px;background:#dcdcdc;'></div>
<div class='a' style='left:504.5px;top:611px;width:0.6px;height:14px;background:#dcdcdc;'></div>
<div class='t ' style='left:216px;top:613.45px;color:#333'>Aktion</div>
<div class='t ' style='left:302.7px;top:613.45px;color:#333'>Objekt</div>
<div class='t ' style='left:510px;top:613.45px;color:#333'>Beschreibung</div>
<svg style='left:194px;top:697px' width='90' height='17' viewBox='0 0 90 17'><path d='M.4 0V14.4Q.4 15.6 1.6 15.6H81.6Q82.8 15.6 82.8 14.4V0' fill='#fff' stroke='#b4b4b4' stroke-width='.7'/></svg>
<div class='a' style='left:195px;top:696.6px;width:81.6px;height:1.6px;background:#fff;'></div>
<svg style='left:196.4px;top:701.6px' width='11' height='9' viewBox='0 0 11 9'><rect x='.5' y='.5' width='10' height='8' fill='#fff' stroke='#1c1c5c' stroke-width='1'/><rect x='.5' y='.5' width='10' height='2' fill='#1c1c5c'/><path d='M2 4.6h2.4v2.4H2zM5.6 4.6h1.4M5.6 6.6h3.6M8 4.6h1.2' fill='none' stroke='#333' stroke-width='.8'/></svg>
<div class='t ' style='left:208.3px;top:702.05px;'>Meldungs-Ansicht</div>
<svg style='left:279.4px;top:701.6px' width='11' height='9' viewBox='0 0 11 9'><rect x='.5' y='.5' width='10' height='8' fill='#fff' stroke='#1c1c5c' stroke-width='1'/><rect x='.5' y='.5' width='10' height='2' fill='#1c1c5c'/><path d='M3.6 2.5v6M6.8 2.5v6M.5 5.4h10' stroke='#8a8ab0' stroke-width='.6'/></svg>
<svg style='left:356.8px;top:701.6px' width='11' height='9' viewBox='0 0 11 9'><rect x='.5' y='.5' width='10' height='8' fill='#fff' stroke='#1c1c5c' stroke-width='1'/><rect x='.5' y='.5' width='10' height='2' fill='#1c1c5c'/><path d='M3.6 2.5v6M6.8 2.5v6M.5 5.4h10' stroke='#8a8ab0' stroke-width='.6'/></svg>
<div class='t g' style='left:291.4px;top:702.05px;'>Tabellen-Ansicht</div>
<div class='t g' style='left:368.8px;top:702.05px;'>Einwirkungstabellen-Ansicht</div>
<div class='a' style='left:353.6px;top:700.6px;width:0.7px;height:11.4px;background:#8a8a8a;'></div>
<div class='a' style='left:472.4px;top:700.6px;width:0.7px;height:11.4px;background:#8a8a8a;'></div>
<div class='pn' style='left:1078.5px;top:55.5px;width:217.5px;height:146.5px'></div>
<div class='t ' style='left:1083px;top:58.25px;'>Auswahlfilter-Ansicht</div>
<svg style='left:1273.00px;top:59.30px' width='6' height='8' viewBox='0 0 6 8'><rect x='1.300' y='.9' width='3.300' height='3.800' fill='#fff' stroke='#111' stroke-width='.9'/><path d='M4 1v3.600' stroke='#111' stroke-width='1.200'/><path d='M.3 5.200h5.400' stroke='#444' stroke-width='.8'/><path d='M3 5.400v2.300' stroke='#555' stroke-width='.9'/></svg>
<svg style='left:1284.60px;top:59.60px' width='7' height='7' viewBox='0 0 7 7'><path d='M.7 .7l5.600 5.600M6.300 .7L.7 6.300' stroke='#111' stroke-width='1.150' fill='none'/></svg>
<div class='a' style='left:1079.5px;top:70px;width:215.5px;height:19px;background:linear-gradient(#fcfcfc,#ededed);'></div>
<svg style='left:1081.3px;top:127.40px' width='8.8' height='8.8' viewBox='0 0 8.8 8.8'><rect x='0' y='0' width='8.8' height='8.8' rx='1.6' fill='#0a66c8'/><path d='M2.2 4.5l1.7 1.7 2.9-3.2' fill='none' stroke='#fff' stroke-width='.9'/></svg>
<svg style='left:1090.4px;top:126.20px' width='11' height='11' viewBox='0 0 11 11'><rect x='.4' y='.6' width='10.2' height='2' fill='#8c8c6a'/><path d='M2.6 3.4h5.8M5.5 3.4v5M2.6 8.8h5.8' stroke='#222' stroke-width='1.5'/></svg>
<div class='t ' style='left:1104.5px;top:127.35px;'>Unterzug</div>
<svg style='left:1081.3px;top:139.50px' width='8.8' height='8.8' viewBox='0 0 8.8 8.8'><rect x='0' y='0' width='8.8' height='8.8' rx='1.6' fill='#0a66c8'/><path d='M2.2 4.5l1.7 1.7 2.9-3.2' fill='none' stroke='#fff' stroke-width='.9'/></svg>
<svg style='left:1090.4px;top:138.30px' width='11' height='11' viewBox='0 0 11 11'><path d='M2 1h2.6v3H2zM6.4 1H9v3H6.4z' fill='#eee' stroke='#777' stroke-width='.6'/><path d='M1.4 8c.6-3 2.6-3 3.2-.6M6.4 7.4c.6-2.4 2.6-2.4 3.2.6' fill='none' stroke='#777' stroke-width='.7'/><path d='M.2 10h10.6' stroke='#1f3fd8' stroke-width='1.2'/></svg>
<div class='t ' style='left:1104.5px;top:139.45px;'>Stab-Streckeneinwirkung</div>
<svg style='left:1081.3px;top:151.70px' width='8.8' height='8.8' viewBox='0 0 8.8 8.8'><rect x='0' y='0' width='8.8' height='8.8' rx='1.6' fill='#0a66c8'/><path d='M2.2 4.5l1.7 1.7 2.9-3.2' fill='none' stroke='#fff' stroke-width='.9'/></svg>
<svg style='left:1090.4px;top:150.50px' width='11' height='11' viewBox='0 0 11 11'><rect x='.4' y='.4' width='10.2' height='1.4' fill='#2a8a8a'/><path d='M2 2.4h2.6v2.6H2zM6.4 2.4H9V5H6.4z' fill='#eee' stroke='#666' stroke-width='.6'/><path d='M.4 6.4h10.2' stroke='#555' stroke-width='.7' stroke-dasharray='1.4 .8'/><rect x='.4' y='7.8' width='10.2' height='2.6' fill='#4a4a4a'/></svg>
<div class='t ' style='left:1104.5px;top:151.65px;'>Faltwerkselement-Streckeneinwirkung</div>
<svg style='left:1156px;top:201px' width='95' height='17' viewBox='0 0 95 17'><path d='M.6 0V14Q.6 15.4 2 15.4H92.2Q93.6 15.4 93.6 14V0' fill='#fff' stroke='#b4b4b4' stroke-width='.7'/></svg>
<div class='a' style='left:1157px;top:200.6px;width:92.2px;height:1.6px;background:#fff;'></div>
<svg style='left:1081px;top:205.6px' width='11' height='9' viewBox='0 0 11 9'><path d='M2.4 6.6c-2.6-1-2-5 1.4-5 1.4-1.4 4.6-1 5 .8 1.6.8 1.4 3.6-.8 4-1 1.2-3 .6-3.4-.2-.6.8-1.6.8-2.2.4z' fill='none' stroke='#b5b5b5' stroke-width='.7' stroke-dasharray='1.2 .6'/></svg>
<div class='t ' style='left:1093.4px;top:206.35px;color:#a6a6a6'>Auswahl-Ansicht</div>
<svg style='left:1158.4px;top:204.6px' width='12' height='12' viewBox='0 0 12 12'><path d='M1.6 6.4C-.4 3 3 .4 5.6 1.6 8.6-.4 11.6 3 9.6 6' fill='none' stroke='#444' stroke-width='.7' stroke-dasharray='1.3 .6'/><path d='M2.8 5h2.4l-.9 2.6v2.6H3.7V7.6z' fill='#fff' stroke='#222' stroke-width='.7'/><path d='M7 5.4l1 1.6 1.4-2' fill='none' stroke='#444' stroke-width='.6'/></svg>
<div class='t ' style='left:1170.9px;top:206.35px;color:#000;-webkit-text-stroke:.12px #000'>Auswahlfilter-Ansicht</div>
<div class='pn' style='left:1078.5px;top:221px;width:217.5px;height:162px'></div>
<div class='t ' style='left:1083px;top:223.75px;'>Weiterleitungs-Ansicht</div>
<svg style='left:1273.00px;top:224.80px' width='6' height='8' viewBox='0 0 6 8'><rect x='1.300' y='.9' width='3.300' height='3.800' fill='#fff' stroke='#111' stroke-width='.9'/><path d='M4 1v3.600' stroke='#111' stroke-width='1.200'/><path d='M.3 5.200h5.400' stroke='#444' stroke-width='.8'/><path d='M3 5.400v2.300' stroke='#555' stroke-width='.9'/></svg>
<svg style='left:1284.60px;top:225.10px' width='7' height='7' viewBox='0 0 7 7'><path d='M.7 .7l5.600 5.600M6.300 .7L.7 6.300' stroke='#111' stroke-width='1.150' fill='none'/></svg>
<div class='a' style='left:1079.5px;top:236px;width:215.5px;height:19px;background:linear-gradient(#fdfdfd,#eeeeee)'></div>
<svg style='left:1081.4px;top:239.4px' width='12' height='12' viewBox='0 0 12 12'><path d='M.8 2.600c0-1.800 8-1.800 8 0v6c0 1.800-8 1.800-8 0z' fill='#e2e2e2' stroke='#b0b0b0' stroke-width='.7'/><path d='M.8 2.600c0 1.800 8 1.800 8 0' fill='none' stroke='#b0b0b0' stroke-width='.6'/><path d='M5.600 4h3.400V2.800l2 2-2 2V5.600H5.600z' fill='#5ab03c'/><path d='M9.400 8.800H6V7.600l-2 2 2 2v-1.200h3.400z' fill='#5ab03c'/></svg>
<div class='t' style='left:1097.4px;top:238.4px;font-family:"Liberation Serif",serif;font-size:12.8px;line-height:13px;height:13px;color:#111;-webkit-text-stroke:.3px'>A</div>
<div class='a' style='left:1087px;top:263px;width:96px;height:18px;background:#f3f3f3;border:.7px solid #d9d9d9;border-radius:2.2px'></div>
<svg style='left:1088.6px;top:267.4px' width='11' height='11' viewBox='0 0 11 11'><path d='M.6 4.4L3.6 1.4H10.6L7.8 4.4z' fill='#9b9b9b'/><path d='M.6 4.4H7.8V5.6H.6z' fill='#777'/><path d='M1.2 5.6V9.8M7.2 5.6V7' stroke='#8a8a62' stroke-width='1'/><circle cx='8.2' cy='8.2' r='2' fill='#9ad05a' stroke='#4d8a24' stroke-width='.7'/></svg>
<div class='t' style='left:1101.3px;top:263.7px;font-size:7.6px;line-height:8.7px;height:18px;color:#111;-webkit-text-stroke:.08px'>Decke mit Unterzug und<br>Stützen - Obergeschoss</div>
<div class='a' style='left:1094.4px;top:303.2px;width:81px;height:18.8px;background:#f3f3f3;border:.7px solid #d9d9d9;border-radius:2.2px'></div>
<svg style='left:1096.0px;top:307.59999999999997px' width='11' height='11' viewBox='0 0 11 11'><path d='M.6 4.4L3.6 1.4H10.6L7.8 4.4z' fill='#9b9b9b'/><path d='M.6 4.4H7.8V5.6H.6z' fill='#777'/><path d='M1.2 5.6V9.8M7.2 5.6V7' stroke='#8a8a62' stroke-width='1'/><circle cx='8.2' cy='8.2' r='2' fill='#9ad05a' stroke='#4d8a24' stroke-width='.7'/></svg>
<div class='t' style='left:1108.7px;top:303.9px;font-size:7.6px;line-height:8.7px;height:18px;color:#111;-webkit-text-stroke:.08px'>Decke mit Unterzug<br>und Stützen</div>
<svg style='left:1130px;top:281px' width='10' height='23' viewBox='0 0 10 23'><path d='M5 1V17' stroke='#2f9e2f' stroke-width='.9'/><path d='M3.4 15.4h3.2L5 21z' fill='#2f9e2f'/></svg>
<div class='pn' style='left:1078.5px;top:386px;width:217.5px;height:311.5px'></div>
<div class='t ' style='left:1083px;top:389.15px;'>Lastfallfilter-Ansicht</div>
<svg style='left:1273.00px;top:390.20px' width='6' height='8' viewBox='0 0 6 8'><rect x='1.300' y='.9' width='3.300' height='3.800' fill='#fff' stroke='#111' stroke-width='.9'/><path d='M4 1v3.600' stroke='#111' stroke-width='1.200'/><path d='M.3 5.200h5.400' stroke='#444' stroke-width='.8'/><path d='M3 5.400v2.300' stroke='#555' stroke-width='.9'/></svg>
<svg style='left:1284.60px;top:390.50px' width='7' height='7' viewBox='0 0 7 7'><path d='M.7 .7l5.600 5.600M6.300 .7L.7 6.300' stroke='#111' stroke-width='1.150' fill='none'/></svg>
<div class='a' style='left:1079.5px;top:402px;width:215.5px;height:17px;background:linear-gradient(#fefefe,#efefef)'></div>
<div class='t ' style='left:1083px;top:406.05px;'>Alle</div>
<div class='t ' style='left:1103.7px;top:406.05px;'>Keiner</div>
<div class='t ' style='left:1134.6px;top:406.05px;'>&gt;</div>
<div class='t ' style='left:1150.6px;top:406.05px;'>&lt;</div>
<svg style='left:1081.3px;top:421.30px' width='8.8' height='8.8' viewBox='0 0 8.8 8.8'><rect x='.4' y='.4' width='8' height='8' rx='1.4' fill='#fff' stroke='#555' stroke-width='.8'/></svg>
<div class='t ' style='left:1091.5px;top:421.25px;'>1 - Ständig (automatisch)</div>
<svg style='left:1081.3px;top:433.50px' width='8.8' height='8.8' viewBox='0 0 8.8 8.8'><rect x='0' y='0' width='8.8' height='8.8' rx='1.6' fill='#0a66c8'/><path d='M2.2 4.5l1.7 1.7 2.9-3.2' fill='none' stroke='#fff' stroke-width='.9'/></svg>
<div class='t ' style='left:1091.5px;top:433.45px;'>2 - Nutzlast A,B</div>
<svg style='left:1081.3px;top:445.70px' width='8.8' height='8.8' viewBox='0 0 8.8 8.8'><rect x='0' y='0' width='8.8' height='8.8' rx='1.6' fill='#0a66c8'/><path d='M2.2 4.5l1.7 1.7 2.9-3.2' fill='none' stroke='#fff' stroke-width='.9'/></svg>
<div class='t ' style='left:1091.5px;top:445.65px;'>3 - Wind von rechts</div>
<svg style='left:1081.3px;top:457.90px' width='8.8' height='8.8' viewBox='0 0 8.8 8.8'><rect x='0' y='0' width='8.8' height='8.8' rx='1.6' fill='#0a66c8'/><path d='M2.2 4.5l1.7 1.7 2.9-3.2' fill='none' stroke='#fff' stroke-width='.9'/></svg>
<div class='t ' style='left:1091.5px;top:457.85px;'>4 - Wind von links</div>
<div class='a' style='left:1079.5px;top:681.6px;width:215.5px;height:15px;background:#fff;border-top:.7px solid #d0d0d0'></div>
<div class='t ' style='left:1082.6px;top:685.45px;'>Überlagerungsregel auswählen</div>
<svg style='left:1286px;top:687px' width='7' height='5' viewBox='0 0 7 5'><path d='M.6 .8L3.5 3.8 6.4 .8' fill='none' stroke='#555' stroke-width='.8'/></svg>
<svg style='left:1151px;top:697px' width='74' height='17' viewBox='0 0 74 17'><path d='M.6 0V14.2Q.6 15.6 2 15.6H70.4Q71.8 15.6 71.8 14.2V0' fill='#fff' stroke='#b4b4b4' stroke-width='.7'/></svg>
<div class='a' style='left:1152px;top:696.6px;width:70.4px;height:1.6px;background:#fff;'></div>
<svg style='left:1080.6px;top:701px' width='12' height='11' viewBox='0 0 12 11'><rect x='3' y='.6' width='8.4' height='6.6' rx='.8' fill='#fff' stroke='#2a2a9a' stroke-width='.9'/><rect x='.6' y='3.6' width='5.4' height='6.4' fill='#e8e0b0' stroke='#2a2a9a' stroke-width='.8'/><path d='M1.6 5.4h3.2M1.6 7h3.2M1.6 8.6h3.2' stroke='#2a2a9a' stroke-width='.6'/></svg>
<div class='t ' style='left:1092.8px;top:702.25px;color:#a6a6a6'>Projekt-Ansicht</div>
<svg style='left:1153.4px;top:700.6px' width='12' height='12' viewBox='0 0 12 12'><rect x='.6' y='.6' width='4.8' height='10.6' fill='#fff' stroke='#222' stroke-width='.8'/><path d='M.6 4.2h4.8M.6 7.8h4.8' stroke='#222' stroke-width='.7'/><path d='M6.4 3.4l1.2 1.2 2-2.4' fill='none' stroke='#4aa832' stroke-width='.8'/></svg>
<div class='t ' style='left:1165px;top:702.25px;color:#000;-webkit-text-stroke:.12px #000'>Lastfallfilter-A...</div>
<svg style='left:1226.6px;top:701.4px' width='10' height='10' viewBox='0 0 10 10'><rect x='.5' y='.5' width='8.4' height='8.4' fill='#e4e4e4' stroke='#9a9a9a' stroke-width='.7'/><path d='M2.2 4.6l1.8 2 3-4' fill='none' stroke='#1c3cc8' stroke-width='1'/></svg>
<div class='t ' style='left:1237.8px;top:702.25px;color:#a6a6a6'>Sichtbarkeits-...</div>
<svg style='left:4.70px;top:37.10px' width='11.4' height='11.4' viewBox='0 0 11 11'><path d='M3 2h5.4l1.8 1.8V10.4H3z' fill='#fff' stroke='#8a8a8a' stroke-width='.7'/><path d='M4.4 5.4h4M4.4 7h4M4.4 8.6h3' stroke='#7ba43c' stroke-width='.7'/><path d='M2.6 0l.8 1.8 1.9.2-1.4 1.3.4 1.9-1.7-1-1.7 1 .4-1.9L0 2l1.9-.2z' fill='#f4d21c' stroke='#b99000' stroke-width='.3'/></svg>
<div class='a' style='left:21.1px;top:35.8px;width:1.2px;height:14px;background:#cdcdcd'></div>
<svg style='left:26.60px;top:37.10px' width='11.4' height='11.4' viewBox='0 0 11 11'><path d='M1 4.400L4 1.600h6L7.400 4.400z' fill='#b4bbfa'/><path d='M1 4.400h6.400v5H1z' fill='#3a4cec'/><path d='M1.600 5h2.400v1.600H1.600z' fill='#8e9af6'/><path d='M7.400 4.400L10 1.600v5L7.400 9.400z' fill='#14207a'/></svg>
<svg style='left:44.30px;top:37.10px' width='11.4' height='11.4' viewBox='0 0 11 11'><path d='M1 1h9v9H2.200L1 8.800z' fill='#3a4cec'/><rect x='2.600' y='1.200' width='5.800' height='4.200' fill='#f2f4ff'/><rect x='3.400' y='6.800' width='4.200' height='3.200' fill='#14207a'/><rect x='4' y='7.400' width='1.200' height='2' fill='#dfe4ff'/></svg>
<svg style='left:62.00px;top:37.10px' width='11.4' height='11.4' viewBox='0 0 11 11'><path d='M1 1h9v9H2.200L1 8.800z' fill='#4a5cf0'/><rect x='2.600' y='1.200' width='5.800' height='4' fill='#f2f4ff'/><path d='M3.400 10.600l1-2.800L9.600 2.200l1.400 1.400L5.800 9.400z' fill='#f6c64c' stroke='#a8741c' stroke-width='.4'/></svg>
<svg style='left:79.30px;top:37.10px' width='11.4' height='11.4' viewBox='0 0 11 11'><path d='M.6 1.2h6.2v3.6H3.6L2.2 6.2V4.8H.6z' fill='#fff' stroke='#222' stroke-width='.8'/><path d='M4.6 5h5.8v5.6H5.4L4.6 9.8z' fill='#2335e0'/><rect x='6' y='5.4' width='3' height='2' fill='#e8ecff'/><rect x='6.2' y='8.4' width='2.6' height='2.2' fill='#14207a'/></svg>
<div class='a' style='left:95.9px;top:35.8px;width:1.2px;height:14px;background:#cdcdcd'></div>
<svg style='left:100.60px;top:37.10px' width='11.4' height='11.4' viewBox='0 0 11 11'><path d='M2.4 1h4.4l2.4 2.4V10.2H2.4z' fill='#fff' stroke='#8a93b8' stroke-width='.7'/><path d='M6.8 1v2.4h2.4' fill='none' stroke='#8a93b8' stroke-width='.6'/><path d='M3.6 6h4.4M3.6 7.6h4.4' stroke='#aab4d8' stroke-width='.6'/></svg>
<svg style='left:118.30px;top:37.10px' width='11.4' height='11.4' viewBox='0 0 11 11'><rect x='.6' y='.6' width='10' height='9.8' fill='#fff' stroke='#222' stroke-width='.9'/><rect x='.6' y='.4' width='10' height='1.6' fill='#2335e0'/><path d='M3.6 3h3l1.4 1.4V9H3.6z' fill='#eef' stroke='#555' stroke-width='.6'/><circle cx='6' cy='6.4' r='1.6' fill='none' stroke='#333' stroke-width='.6'/></svg>
<svg style='left:136.00px;top:37.10px' width='11.4' height='11.4' viewBox='0 0 11 11'><path d='M2 1h4.4l2.4 2.4V10.2H2z' fill='#fff' stroke='#8a93b8' stroke-width='.7'/><circle cx='6.4' cy='6.4' r='2.2' fill='#eaf6ff' stroke='#333' stroke-width='.7'/><path d='M8 8l2.2 2.4' stroke='#c07a1c' stroke-width='1.3'/></svg>
<svg style='left:153.70px;top:37.10px' width='11.4' height='11.4' viewBox='0 0 11 11'><path d='M3 4.2L4.4 1h5l-1 3.2z' fill='#fff' stroke='#8a93b8' stroke-width='.6'/><path d='M.8 5.6L2.6 4.2h7.8L9 5.6z' fill='#c9cfdf'/><path d='M.8 5.6H9V9.4H.8z' fill='#aab2c8'/><path d='M9 5.6l1.4-1.4V8L9 9.4z' fill='#7d869e'/><path d='M2 10.2l1-1.6h5l-1 1.6z' fill='#fff' stroke='#8a93b8' stroke-width='.5'/></svg>
<svg style='left:171.00px;top:37.10px' width='11.4' height='11.4' viewBox='0 0 11 11'><rect x='4' y='1' width='6.6' height='9' rx='.6' fill='#dfe8f8' stroke='#2b579a' stroke-width='.6'/><rect x='.4' y='2' width='7' height='7.2' rx='.6' fill='#1d4fa0'/><text x='1.2' y='8' font-family='Liberation Sans' font-weight='700' font-size='6' fill='#fff'>W</text></svg>
<svg style='left:188.50px;top:37.10px' width='11.4' height='11.4' viewBox='0 0 11 11'><path d='M3 1.6h4.6l2.2 2.2V10.4H3z' fill='#fff' stroke='#b8b8b8' stroke-width='.6'/><rect x='.6' y='.6' width='6.4' height='2.8' fill='#d8141c'/><path d='M4.2 9c1-1.6 1.6-3 1.6-4.4 0 1.6 1 3 2.8 3.6-1.6 0-3 .2-4.4.8z' fill='none' stroke='#d8141c' stroke-width='.7'/></svg>
<svg style='left:206.80px;top:37.10px' width='11.4' height='11.4' viewBox='0 0 11 11'><rect x='1.400' y='1.200' width='8' height='8.400' fill='#fff' stroke='#c4c4c4' stroke-width='.5'/><path d='M9.700 1.800V9.900H1.800' fill='none' stroke='#222' stroke-width='1.200'/><path d='M1.800 4.400L5.400 1.200 9 4.400z' fill='#8e8e8e'/><path d='M2 4.800h6.800' stroke='#555' stroke-width='.6'/><circle cx='4.500' cy='6.400' r='.8' fill='#6a86f4'/><circle cx='6.400' cy='6.400' r='1' fill='#1c2ee0'/><path d='M2 8.100h6.800' stroke='#c9c08a' stroke-width='.7'/></svg>
<div class='a' style='left:222.6px;top:35.8px;width:1.2px;height:14px;background:#cdcdcd'></div>
<svg style='left:228.10px;top:37.10px' width='11.4' height='11.4' viewBox='0 0 11 11'><path d='M2.600 6.800c-3-1.200-2.200-5.200 1.600-4.800 1.600-1.400 5-.8 5.200 1 1.800 1 1.600 3.400-.4 4.200l-.6 1.400-1.400-1.200c-1 .2-1.800-.2-2.200-.8-.8.800-1.600.6-2.200.2z' fill='none' stroke='#222' stroke-width='.8' stroke-dasharray='1.100 .6'/></svg>
<svg style='left:245.30px;top:37.10px' width='11.4' height='11.4' viewBox='0 0 11 11'><path d='M1.600 1.600l7.800 7.800M9.400 1.600L1.600 9.400' stroke='#111' stroke-width='1'/></svg>
<svg style='left:262.60px;top:37.10px' width='11.4' height='11.4' viewBox='0 0 11 11'><rect x='1.400' y='1.800' width='4.800' height='5.600' fill='#dfe7ff' stroke='#5a6ee0' stroke-width='.7'/><rect x='4.200' y='3.800' width='5' height='5.800' fill='#b9c8ff' stroke='#3a50d8' stroke-width='.7'/></svg>
<div class='a' style='left:279.4px;top:35.8px;width:1.2px;height:14px;background:#cdcdcd'></div>
<svg style='left:284.50px;top:37.10px' width='11.4' height='11.4' viewBox='0 0 11 11'><path d='M2.2 4.6h4c3 0 3 4.6 0 4.6' fill='none' stroke='#9c9c9c' stroke-width='2'/><path d='M.2 4.600l3.400-3v6z' fill='#9c9c9c'/></svg>
<svg style='left:301.80px;top:37.10px' width='11.4' height='11.4' viewBox='0 0 11 11'><path d='M8.8 4.6h-4c-3 0-3 4.6 0 4.6' fill='none' stroke='#9c9c9c' stroke-width='2'/><path d='M10.800 4.600l-3.400-3v6z' fill='#9c9c9c'/></svg>
<div class='a' style='left:318.6px;top:35.8px;width:1.2px;height:14px;background:#cdcdcd'></div>
<svg style='left:323.50px;top:37.10px' width='11.4' height='11.4' viewBox='0 0 11 11'><rect x='1' y='3.6' width='8.4' height='6.6' fill='#e8e8f4' stroke='#3a3a8a' stroke-width='.8'/><path d='M1 5.4h8.4' stroke='#3a3a8a' stroke-width='.6'/><path d='M3.6 3.2L6 .8l4.4 1.6-2 2.6z' fill='#e8c63c' stroke='#8a6a10' stroke-width='.5'/><path d='M6.4 2.4l2.8 1' stroke='#4a9a2a' stroke-width='1'/></svg>
<svg style='left:338.70px;top:37.10px' width='11.4' height='11.4' viewBox='0 0 11 11'><path d='M.6 5.600L5.500 1l4.900 4.600' fill='none' stroke='#8a3a10' stroke-width='1'/><path d='M2 5.400L5.500 2.200 9 5.400v5H2z' fill='#fffdf0' stroke='#6a4a1a' stroke-width='.6'/><rect x='4.400' y='6.800' width='2.200' height='3.600' fill='#f0d020'/><rect x='7.400' y='1.400' width='1.200' height='2.200' fill='#8a3a10'/></svg>
<svg style='left:351.3px;top:42.0px' width='4' height='3' viewBox='0 0 4 3'><path d='M0 0h4L2 2.400z' fill='#222'/></svg>
<svg style='left:361.00px;top:37.10px' width='11.4' height='11.4' viewBox='0 0 11 11'><rect x='3.4' y='.8' width='7' height='5.4' fill='#fff' stroke='#2335e0' stroke-width='.9'/><rect x='3.4' y='.8' width='7' height='1.4' fill='#2335e0'/><path d='M5 3.6h3.6' stroke='#2335e0' stroke-width='.9'/><path d='M1 7.4h3v2.6M1.4 10.2c0-2 2-2 2 0' fill='none' stroke='#333' stroke-width='.8'/></svg>
<div class='a' style='left:376.9px;top:35.8px;width:1.2px;height:14px;background:#cdcdcd'></div>
<svg style='left:382.30px;top:37.10px' width='11.4' height='11.4' viewBox='0 0 11 11'><circle cx='5.500' cy='5.800' r='3.500' fill='#2a3cf0'/><circle cx='4.400' cy='4.600' r='1.400' fill='#b4beff'/></svg>
<svg style='left:399.50px;top:37.10px' width='11.4' height='11.4' viewBox='0 0 11 11'><circle cx='4.600' cy='4.400' r='3.400' fill='#2a3cf0'/><circle cx='3.600' cy='3.300' r='1.300' fill='#b4beff'/><path d='M7 5.2v5.4l1.3-1.2.9 1.9.9-.4-.9-1.9h1.7z' fill='#fff' stroke='#222' stroke-width='.5'/></svg>
<svg style='left:417.80px;top:37.10px' width='11.4' height='11.4' viewBox='0 0 11 11'><path d='M.6 5.400L5 1.600V9.400z' fill='#d2d2d2' stroke='#6a6a6a' stroke-width='.7'/><path d='M5 1.600L7.800 5.400 5 9.400' fill='#a8a8a8' stroke='#5a5a5a' stroke-width='.7'/><path d='M7 6v4.400l1.100-1 .8 1.600.8-.4-.8-1.600h1.500z' fill='#fff' stroke='#1a9a9a' stroke-width='.5'/></svg>
<svg style='left:435.10px;top:37.10px' width='11.4' height='11.4' viewBox='0 0 11 11'><path d='M.6 10L9.6 1.2' stroke='#2335e0' stroke-width='1.2'/><path d='M7 5.6v4.8l1.1-1 .8 1.6.8-.4-.8-1.6h1.5z' fill='#fff' stroke='#1a9a9a' stroke-width='.5'/></svg>
<div class='a' style='left:451.3px;top:35.8px;width:1.2px;height:14px;background:#cdcdcd'></div>
<svg style='left:457.30px;top:37.10px' width='11.4' height='11.4' viewBox='0 0 11 11'><path d='M3.6 1c-1 1.6 1 2.4 0 4' fill='none' stroke='#333' stroke-width='.8'/><circle cx='3.6' cy='7.4' r='2.2' fill='#2335e0'/><path d='M7 5.6v4.8l1.1-1 .8 1.6.8-.4-.8-1.6h1.5z' fill='#fff' stroke='#1a9a9a' stroke-width='.5'/></svg>
<svg style='left:474.50px;top:37.10px' width='11.4' height='11.4' viewBox='0 0 11 11'><path d='M3.8 1v6.4' stroke='#222' stroke-width='1.4'/><path d='M.4 8.6h7' stroke='#2335e0' stroke-width='1.2'/><path d='M2.6 6l1.2 2 1.2-2z' fill='#e8c81c'/><path d='M6 6.6l1.6-1.8 1 3.4 1.6-1.4' fill='none' stroke='#222' stroke-width='.7'/></svg>
<svg style='left:491.80px;top:37.10px' width='11.4' height='11.4' viewBox='0 0 11 11'><path d='M3.4 1.4v5' stroke='#333' stroke-width='1'/><circle cx='3.4' cy='2' r='1.2' fill='#e8c81c'/><path d='M1.4 7.8l2-3 2 3z' fill='#e8c81c' stroke='#8a6a10' stroke-width='.4'/><path d='M.4 9h7' stroke='#2335e0' stroke-width='1.2'/><path d='M7 5.6v4.8l1.1-1 .8 1.6.8-.4-.8-1.6h1.5z' fill='#fff' stroke='#1a9a9a' stroke-width='.5'/></svg>
<svg style='left:509.50px;top:37.10px' width='11.4' height='11.4' viewBox='0 0 11 11'><path d='M1.4 1h6M1.4 2.6h6' stroke='#555' stroke-width='.7' stroke-dasharray='1.2 .6'/><path d='M2 7.6c.4-3 2-3 2.6-.4M5 7.2c.4-2.6 2-2.6 2.4.4' fill='none' stroke='#666' stroke-width='.7'/><path d='M.4 9h7.4' stroke='#2335e0' stroke-width='1.2'/><path d='M7 5.6v4.8l1.1-1 .8 1.6.8-.4-.8-1.6h1.5z' fill='#fff' stroke='#1a9a9a' stroke-width='.5'/></svg>
<div class='a' style='left:525.9px;top:35.8px;width:1.2px;height:14px;background:#cdcdcd'></div>
<svg style='left:531.30px;top:37.10px' width='11.4' height='11.4' viewBox='0 0 11 11'><path d='M.6 2.6L4.6 7.6 10.4 2' fill='none' stroke='#6d6d48' stroke-width='1.1'/><path d='M.6 4.6L4.6 9.6 10.4 4' fill='none' stroke='#cfcfa8' stroke-width='1'/></svg>
<svg style='left:548.70px;top:37.10px' width='11.4' height='11.4' viewBox='0 0 11 11'><path d='M1 9.6V6.4L7.4 1.8h2.8V5L3.8 9.6z' fill='#e4e4e4' stroke='#111' stroke-width='1.1'/><path d='M1 6.4h2.8V9.6M3.8 6.4L10.2 1.8' fill='none' stroke='#111' stroke-width='.8'/></svg>
<svg style='left:566.00px;top:37.10px' width='11.4' height='11.4' viewBox='0 0 11 11'><path d='M.6 8.6V5.8L6 1.6h2.6v2.8L3.2 8.6z' fill='#d8d8d8' stroke='#111' stroke-width='1'/><path d='M.6 5.8h2.6V8.6M3.2 5.8L8.6 1.6' fill='none' stroke='#111' stroke-width='.7'/><path d='M7 5.6v4.8l1.1-1 .8 1.6.8-.4-.8-1.6h1.5z' fill='#fff' stroke='#222' stroke-width='.5'/></svg>
<svg style='left:583.50px;top:37.10px' width='11.4' height='11.4' viewBox='0 0 11 11'><rect x='.8' y='1.2' width='9.6' height='8' fill='#c9c9c9' stroke='#111' stroke-width='1.2'/><path d='M1.8 8.4h7.8V2.2' fill='none' stroke='#777' stroke-width='.7'/></svg>
<svg style='left:600.80px;top:37.10px' width='11.4' height='11.4' viewBox='0 0 11 11'><rect x='.8' y='1' width='5.6' height='9' fill='#8a8a62' stroke='#55553f' stroke-width='.6'/><path d='M7 2.4h3.4M7 4.6h3.4M7 6.8h3.4M7 9h3.4' stroke='#555' stroke-width='.7' stroke-dasharray='1.2 .6'/></svg>
<svg style='left:618.50px;top:37.10px' width='11.4' height='11.4' viewBox='0 0 11 11'><rect x='.6' y='1' width='9.8' height='2.4' fill='#8a8a62'/><path d='M3 4.2h5M5.5 4.2v4.4M3 9.2h5' stroke='#222' stroke-width='1.4'/><path d='M9 8l1.2 2.2' stroke='#222' stroke-width='.6'/></svg>
<svg style='left:636.20px;top:37.10px' width='11.4' height='11.4' viewBox='0 0 11 11'><path d='M.4 3.6h8' stroke='#333' stroke-width='1'/><path d='M1 2l1 1.4M3 2l1 1.4M5 2l1 1.4M7 2l1 1.4' stroke='#666' stroke-width='.6'/><path d='M7 4.6v5.2l1.1-1 .8 1.6.8-.4-.8-1.6h1.5z' fill='#fff' stroke='#1a9a9a' stroke-width='.6'/></svg>
<svg style='left:653.50px;top:37.10px' width='11.4' height='11.4' viewBox='0 0 11 11'><path d='M.4 4.400L3 1.600h7.800L8.200 4.400z' fill='#8a8a8a'/><rect x='.4' y='4.400' width='7.800' height='2.600' fill='#444'/><path d='M8.200 4.400l2.600-2.800v2.600L8.200 7z' fill='#2a2a2a'/><path d='M1 7.200l.8 2.800M3 7.200l.8 2.800M5 7.200l.8 2.800M7 7.200l.8 2.800' stroke='#222' stroke-width='1'/><path d='M9.600 5.600v3.600' stroke='#222' stroke-width='.8'/></svg>
<div class='a' style='left:670.0px;top:35.8px;width:1.2px;height:14px;background:#cdcdcd'></div>
<svg style='left:674.70px;top:37.10px' width='11.4' height='11.4' viewBox='0 0 11 11'><path d='M1.200 4.800h8.600v4.400H1.200z' fill='#bdbdbd' stroke='#4a4a4a' stroke-width='.8'/><path d='M3 4.600L5.500 1l2.500 3.600z' fill='#9a9a9a' stroke='#444' stroke-width='.6'/><path d='M.2 9.800h10.600' stroke='#333' stroke-width='1.100'/><path d='M2.400 6.600h6.200M2.400 8h6.200' stroke='#666' stroke-width='.6'/></svg>
<svg style='left:692.40px;top:37.10px' width='11.4' height='11.4' viewBox='0 0 11 11'><rect x='2.400' y='.8' width='8' height='5.400' fill='#b4b4b4' stroke='#4a4a4a' stroke-width='.8'/><rect x='.6' y='4' width='7.400' height='6' fill='#a4a4a4' stroke='#3a3a3a' stroke-width='.8'/><path d='M1.800 6h5M1.800 8h5M4 2.400h5' stroke='#5a5a5a' stroke-width='.7'/></svg>
<svg style='left:710.10px;top:37.10px' width='11.4' height='11.4' viewBox='0 0 11 11'><path d='M.4 9.600l1.800-4.400h7l1.600 4.400z' fill='#b0b0b0' stroke='#3a3a3a' stroke-width='.8'/><rect x='2.800' y='6.200' width='5.400' height='2.600' fill='#5a5a5a'/></svg>
<div class='a' style='left:726.9px;top:35.8px;width:1.2px;height:14px;background:#cdcdcd'></div>
<svg style='left:732.00px;top:37.10px' width='11.4' height='11.4' viewBox='0 0 11 11'><path d='M2 1.2l5.6 6M8 1.2L2.4 7.2' stroke='#222' stroke-width='.9'/><path d='M.4 8h5' stroke='#222' stroke-width='1'/><path d='M7 5.6v4.8l1.1-1 .8 1.6.8-.4-.8-1.6h1.5z' fill='#fff' stroke='#1a9a9a' stroke-width='.6'/></svg>
<div class='a' style='left:748.4px;top:35.8px;width:1.2px;height:14px;background:#cdcdcd'></div>
<svg style='left:752.80px;top:37.10px' width='11.4' height='11.4' viewBox='0 0 11 11'><path d='M.6 3.4h9.4' stroke='#2a46e0' stroke-width='.8'/><path d='M1 3.8c.6 4 7.4 4 8.4 0z' fill='#2a46e0'/><path d='M7 3.4c1.6-.4 2.8-1.4 3.4-3' fill='none' stroke='#e01c1c' stroke-width='1.2'/></svg>
<svg style='left:771.00px;top:37.10px' width='11.4' height='11.4' viewBox='0 0 11 11'><path d='M.6 3.4h9.4' stroke='#2a46e0' stroke-width='.8'/><path d='M1 3.8c.6 4 7.4 4 8.4 0z' fill='#2a46e0'/><path d='M7 3.4c1.6-.4 2.8-1.4 3.4-3' fill='none' stroke='#e01c1c' stroke-width='1.2'/><path d='M2.6 5h4.6' stroke='#9ab0ff' stroke-width='.6'/></svg>
<svg style='left:788.20px;top:37.10px' width='11.4' height='11.4' viewBox='0 0 11 11'><path d='M0 3.6h8.6' stroke='#9c9c9c' stroke-width='.9'/><path d='M.8 4c.8 3.400 5.800 3.400 7 0z' fill='#c4c4c4' stroke='#9c9c9c' stroke-width='.7'/><path d='M2.400 4v2.400M4.200 4v2.800M6 4v2.400' stroke='#e8e8e8' stroke-width='.6'/><text x='7.600' y='10.800' font-family='Liberation Sans' font-size='7' fill='#9c9c9c'>1</text></svg>
<svg style='left:806.00px;top:37.10px' width='11.4' height='11.4' viewBox='0 0 11 11'><path d='M1.400 3.400c-.2 6.600 8.800 6.600 8.600 0' fill='none' stroke='#9c9c9c' stroke-width='1'/><path d='M2.600 6.800c1.600 1.400 4.600 1.400 6.200 0' fill='none' stroke='#bdbdbd' stroke-width='.7'/><text x='.2' y='5' font-family='Liberation Sans' font-size='6.400' fill='#9c9c9c'>1</text></svg>
<svg style='left:824.10px;top:37.10px' width='11.4' height='11.4' viewBox='0 0 11 11'><path d='M0 3.6h8.6' stroke='#9c9c9c' stroke-width='.9'/><path d='M.8 4c.8 3.400 5.800 3.400 7 0z' fill='#c4c4c4' stroke='#9c9c9c' stroke-width='.7'/><path d='M2.400 4v2.400M4.200 4v2.800M6 4v2.400' stroke='#e8e8e8' stroke-width='.6'/><text x='7.600' y='10.800' font-family='Liberation Sans' font-size='7' fill='#9c9c9c'>2</text></svg>
<svg style='left:841.40px;top:37.10px' width='11.4' height='11.4' viewBox='0 0 11 11'><path d='M1.400 3.400c-.2 6.600 8.800 6.600 8.600 0' fill='none' stroke='#9c9c9c' stroke-width='1'/><path d='M2.600 6.800c1.600 1.400 4.600 1.400 6.200 0' fill='none' stroke='#bdbdbd' stroke-width='.7'/><text x='.2' y='5' font-family='Liberation Sans' font-size='6.400' fill='#9c9c9c'>2</text></svg>
<svg style='left:858.80px;top:37.10px' width='11.4' height='11.4' viewBox='0 0 11 11'><path d='M.6 1.6h9.8M.6 3h9.8' stroke='#222' stroke-width='.6'/><path d='M7 3.6L10.2 1.2' stroke='#222' stroke-width='.6'/><text x='.6' y='10.2' font-family='Liberation Sans' font-size='6' fill='#222'>ZZ</text></svg>
<svg style='left:876.20px;top:37.10px' width='11.4' height='11.4' viewBox='0 0 11 11'><text x='.4' y='9' font-family='Liberation Serif' font-style='italic' font-weight='700' font-size='10.4' fill='#111'>f</text><text x='5.2' y='9.6' font-family='Liberation Sans' font-weight='700' font-size='5' fill='#111'>x</text></svg>
<svg style='left:894.20px;top:37.10px' width='11.4' height='11.4' viewBox='0 0 11 11'><text x='.4' y='9' font-family='Liberation Serif' font-style='italic' font-size='10.4' fill='#a8a8a8'>f</text><path d='M5.6 5.4l4.4 4.8M10 5.4L5.6 10.2' stroke='#a8a8a8' stroke-width='.8'/></svg>
<svg style='left:911.60px;top:37.10px' width='11.4' height='11.4' viewBox='0 0 11 11'><path d='M.8 3.6L3 2h7.4v6.6H.8z' fill='#bcbcbc' stroke='#a8a8a8' stroke-width='.6'/><path d='M.8 8.6L10.4 2' stroke='#8a8a8a' stroke-width='.7'/></svg>
<div class='a' style='left:927.6px;top:35.8px;width:1.2px;height:14px;background:#cdcdcd'></div>
<svg style='left:933.30px;top:37.10px' width='11.4' height='11.4' viewBox='0 0 11 11'><circle cx='2.6' cy='2.6' r='1.9' fill='#2335e0' stroke='#14207a' stroke-width='.5'/><circle cx='2.100' cy='2.100' r='.7' fill='#c8d4ff'/><circle cx='8.2' cy='8' r='1.9' fill='#2f6df0' stroke='#14207a' stroke-width='.5'/><circle cx='7.700' cy='7.500' r='.7' fill='#c8d4ff'/><path d='M3 4.800c0 2.200 1.200 3 2.800 3' fill='none' stroke='#111' stroke-width='.6' stroke-dasharray='1 .6'/><path d='M5.200 6.800l1.300 1-1.300 1z' fill='#111'/></svg>
<svg style='left:950.90px;top:37.10px' width='11.4' height='11.4' viewBox='0 0 11 11'><circle cx='2.2' cy='5.5' r='1.8' fill='#2335e0' stroke='#14207a' stroke-width='.5'/><circle cx='8.8' cy='5.5' r='1.8' fill='#3f7df0' stroke='#14207a' stroke-width='.5'/><path d='M5.5 1v9' stroke='#111' stroke-width='.8'/></svg>
<svg style='left:968.30px;top:37.10px' width='11.4' height='11.4' viewBox='0 0 11 11'><circle cx='2.6' cy='2.6' r='1.9' fill='#2335e0' stroke='#14207a' stroke-width='.5'/><circle cx='2.100' cy='2.100' r='.7' fill='#c8d4ff'/><circle cx='8.2' cy='8' r='1.9' fill='#2f6df0' stroke='#14207a' stroke-width='.5'/><circle cx='7.700' cy='7.500' r='.7' fill='#c8d4ff'/><path d='M3 5c0 3 3 4.4 4 2M6.4 1.6c1.6.4 2.6 2 2 4' fill='none' stroke='#111' stroke-width='.55' stroke-dasharray='1 .6'/></svg>
<svg style='left:986.10px;top:37.10px' width='11.4' height='11.4' viewBox='0 0 11 11'><circle cx='2.6' cy='2.6' r='1.9' fill='#2335e0' stroke='#14207a' stroke-width='.5'/><circle cx='2.100' cy='2.100' r='.7' fill='#c8d4ff'/><circle cx='8.2' cy='8' r='1.9' fill='#2f6df0' stroke='#14207a' stroke-width='.5'/><circle cx='7.700' cy='7.500' r='.7' fill='#c8d4ff'/><path d='M2.6 4.8c0 2.2 1.2 3.2 3.2 3.2' fill='none' stroke='#111' stroke-width='.7' stroke-dasharray='1.2 .6'/></svg>
<div class='a' style='left:1002.3px;top:35.8px;width:1.2px;height:14px;background:#cdcdcd'></div>
<svg style='left:1006.90px;top:37.10px' width='11.4' height='11.4' viewBox='0 0 11 11'><path d='M1 1v8.2l2-1.8 1.4 3 1.2-.6-1.4-3h2.6z' fill='#fff' stroke='#333' stroke-width='.7'/><text x='6.4' y='4.6' font-family='Liberation Sans' font-size='4.6' fill='#333'>[m]</text></svg>
<svg style='left:1024.80px;top:37.10px' width='11.4' height='11.4' viewBox='0 0 11 11'><path d='M1 1v8.2l2-1.8 1.4 3 1.2-.6-1.4-3h2.6z' fill='#fff' stroke='#333' stroke-width='.7'/><text x='6.4' y='4.6' font-family='Liberation Sans' font-size='4.6' fill='#333'>[+]</text></svg>
<svg style='left:1042.30px;top:37.10px' width='11.4' height='11.4' viewBox='0 0 11 11'><path d='M1 1v8.2l2-1.8 1.4 3 1.2-.6-1.4-3h2.6z' fill='#fff' stroke='#333' stroke-width='.7'/><text x='6.4' y='4.6' font-family='Liberation Sans' font-size='4.6' fill='#333'>◇</text></svg>
<div class='a' style='left:1059.2px;top:35.8px;width:1.2px;height:14px;background:#cdcdcd'></div>
<svg style='left:1061.30px;top:37.10px' width='11.4' height='11.4' viewBox='0 0 11 11'><path d='M.6 9.4h10M.6 9.4V7.2h2.2V5.4h2.2V7.2h2.4V5.4H9.6V9.4' fill='#777' stroke='#333' stroke-width='.6'/></svg>
<div class='a' style='left:271.4px;top:77.0px;width:1.2px;height:14px;background:#cdcdcd'></div>
<div class='a' style='left:274px;top:75.0px;width:17.8px;height:18px;background:#f9fcff;border:.8px solid #4a90d9;border-radius:.8px'></div>
<svg style='left:277.20px;top:78.30px' width='11.4' height='11.4' viewBox='0 0 11 11'><path d='M3.600 1.600v7.400l1.800-1.600 1.200 2.600 1.100-.5-1.200-2.600h2.500z' fill='#fff' stroke='#111' stroke-width='.75'/></svg>
<svg style='left:295.30px;top:78.30px' width='11.4' height='11.4' viewBox='0 0 11 11'><path d='M4.4 9.6C-.6 8.4.2 1.6 5 1c4.4-.4 6 3.6 4.4 5.6' fill='none' stroke='#333' stroke-width='.8' stroke-dasharray='1.4 .7'/><circle cx='6.6' cy='4.2' r='2.2' fill='#9ac6f8' stroke='#4a78c8' stroke-width='.5'/><path d='M6 5.8v4.6l1-.9.8 1.5.8-.4-.8-1.5h1.4z' fill='#fff' stroke='#222' stroke-width='.5'/></svg>
<div class='a' style='left:311.1px;top:77.0px;width:1.2px;height:14px;background:#cdcdcd'></div>
<svg style='left:316.60px;top:78.30px' width='11.4' height='11.4' viewBox='0 0 11 11'><circle cx='6.2' cy='4.2' r='3.300' fill='#c6eef6' stroke='#222' stroke-width='.75'/><circle cx='5.200' cy='3.200' r='1.100' fill='#fff' fill-opacity='.8'/><path d='M4 6.600L.8 10.200' stroke='#111' stroke-width='1.500'/><path d='M7 8l1.6 2.4 1.6-2.4z' fill='#111'/></svg>
<svg style='left:334.10px;top:78.30px' width='11.4' height='11.4' viewBox='0 0 11 11'><circle cx='6.2' cy='4.2' r='3.300' fill='#ffc0c0' stroke='#222' stroke-width='.75'/><circle cx='5.200' cy='3.200' r='1.100' fill='#fff' fill-opacity='.8'/><path d='M4 6.600L.8 10.200' stroke='#111' stroke-width='1.500'/><circle cx='6.2' cy='4.2' r='1.6' fill='#e01c1c'/><path d='M7 8l1.6 2.4 1.6-2.4z' fill='#111'/></svg>
<svg style='left:351.60px;top:78.30px' width='11.4' height='11.4' viewBox='0 0 11 11'><circle cx='6.2' cy='4.2' r='3.300' fill='#c6eef6' stroke='#222' stroke-width='.75'/><circle cx='5.200' cy='3.200' r='1.100' fill='#fff' fill-opacity='.8'/><path d='M4 6.600L.8 10.200' stroke='#111' stroke-width='1.500'/></svg>
<svg style='left:368.90px;top:78.30px' width='11.4' height='11.4' viewBox='0 0 11 11'><path d='M5.500 1.600v7.800M1.600 5.500h7.800' stroke='#111' stroke-width='1.100'/><path d='M5.500 .8l1.700 2H3.800zM5.500 10.200L3.800 8.200h3.400zM.8 5.500l2-1.700v3.400zM10.200 5.500L8.200 7.200V3.800z' fill='#111'/></svg>
<svg style='left:386.30px;top:78.30px' width='11.4' height='11.4' viewBox='0 0 11 11'><circle cx='6.2' cy='4.2' r='3.300' fill='#c6eef6' stroke='#222' stroke-width='.75'/><circle cx='5.200' cy='3.200' r='1.100' fill='#fff' fill-opacity='.8'/><path d='M4 6.600L.8 10.200' stroke='#111' stroke-width='1.500'/><path d='M7.6 8.2h3M9.1 6.700v3' stroke='#111' stroke-width='.9'/></svg>
<svg style='left:404.10px;top:78.30px' width='11.4' height='11.4' viewBox='0 0 11 11'><circle cx='6.2' cy='4.2' r='3.300' fill='#c6eef6' stroke='#222' stroke-width='.75'/><circle cx='5.200' cy='3.200' r='1.100' fill='#fff' fill-opacity='.8'/><path d='M4 6.600L.8 10.200' stroke='#111' stroke-width='1.500'/><path d='M7.400 9.200h3.2' stroke='#111' stroke-width='.9'/></svg>
<svg style='left:421.10px;top:78.30px' width='11.4' height='11.4' viewBox='0 0 11 11'><path d='M1 1h5.600l2 2V10.200H1z' fill='#fff' stroke='#111' stroke-width='.8'/><circle cx='7' cy='6.200' r='2.600' fill='#c6eef6' stroke='#111' stroke-width='.8'/><path d='M5.200 8.200L3.200 10.600' stroke='#111' stroke-width='1.200'/></svg>
<div class='a' style='left:472.2px;top:77.0px;width:1.2px;height:14px;background:#cdcdcd'></div>
<svg style='left:477.20px;top:78.30px' width='11.4' height='11.4' viewBox='0 0 11 11'><circle cx='5.500' cy='5.500' r='4.700' fill='#3a78e4' stroke='#2458b8' stroke-width='.6'/><path d='M2.200 5.500l3-2.800v1.800h3.400v2H5.200v1.800z' fill='#fff'/></svg>
<svg style='left:494.40px;top:78.30px' width='11.4' height='11.4' viewBox='0 0 11 11'><circle cx='5.500' cy='5.500' r='4.800' fill='#c4c4c4' stroke='#a8a8a8' stroke-width='.6'/><path d='M8.800 5.500l-3-2.800v1.800H2.400v2h3.400v1.800z' fill='#e8e8e8'/></svg>
<div class='a' style='left:510.3px;top:77.0px;width:1.2px;height:14px;background:#cdcdcd'></div>
<div class='a' style='left:513.4px;top:75.0px;width:17.3px;height:18px;background:#f9fcff;border:.8px solid #4a90d9;border-radius:.8px'></div>
<svg style='left:516.10px;top:78.30px' width='11.4' height='11.4' viewBox='0 0 11 11'><path d='M1 10V4l3-3h5.400v6.200l-3 2.800z' fill='#f6f0c8' stroke='#333' stroke-width='.8'/><circle cx='4.600' cy='6.400' r='1.800' fill='#fff' stroke='#6a6a6a' stroke-width='.6'/><path d='M1 4h5.400V10M6.400 4l3-3' fill='none' stroke='#333' stroke-width='.6'/></svg>
<svg style='left:533.60px;top:78.30px' width='11.4' height='11.4' viewBox='0 0 11 11'><rect x='1.400' y='.8' width='8' height='9.600' rx='1' fill='#fff' stroke='#222' stroke-width='.9'/><rect x='3.400' y='3' width='2.600' height='5.200' fill='#e89a7a' stroke='#a8523a' stroke-width='.5'/><path d='M7.800 2.600v6' stroke='#555' stroke-width='.6'/></svg>
<svg style='left:551.00px;top:78.30px' width='11.4' height='11.4' viewBox='0 0 11 11'><path d='M1.200 5.800L5.500 1.800l4.300 4' fill='none' stroke='#a86a1c' stroke-width='.9'/><path d='M2.400 5.600L5.500 2.800l3.100 2.800v4.600H2.400z' fill='#fffdf2' stroke='#8a6a1a' stroke-width='.55'/><rect x='4.500' y='7' width='2' height='3.200' fill='#f0cc3c'/></svg>
<svg style='left:568.60px;top:78.30px' width='11.4' height='11.4' viewBox='0 0 11 11'><path d='M1 5.800L5.500 2.600 10 5.800z' fill='#e8543c' stroke='#8a2a1a' stroke-width='.4'/><rect x='1.800' y='5.800' width='7.400' height='4.200' fill='#f6f0dc' stroke='#6a5a3a' stroke-width='.55'/><path d='M3 7.200h5M3 8.600h5' stroke='#b8aa8a' stroke-width='.55'/><path d='M5.500 1v1.800' stroke='#e03a2a' stroke-width='.8'/></svg>
<svg style='left:586.50px;top:78.30px' width='11.4' height='11.4' viewBox='0 0 11 11'><path d='M2 6.400a3.600 3.600 0 1 1 3.600 3.400' fill='none' stroke='#222' stroke-width='.9'/><path d='M.4 5.400l1.600 2.400 1.800-2.200z' fill='#222'/><circle cx='5.600' cy='6.200' r='.9' fill='#222'/></svg>
<svg style='left:601.70px;top:78.30px' width='11.4' height='11.4' viewBox='0 0 11 11'><path d='M.6 1.200h9.800M.6 4h9.800M.6 6.800h9.800M.6 9.600h9.800M1 .8v9.200M3.800 .8v9.200M6.600 .8v9.200M9.400 .8v9.200' stroke='#333' stroke-width='.8'/></svg>
<svg style='left:616.6px;top:83.2px' width='4' height='3' viewBox='0 0 4 3'><path d='M0 0h4L2 2.400z' fill='#222'/></svg>
<div class='a' style='left:624.6px;top:77.0px;width:1.2px;height:14px;background:#cdcdcd'></div>
<svg style='left:629.00px;top:78.30px' width='11.4' height='11.4' viewBox='0 0 11 11'><path d='M1 3l3-1.800h6v6.400L7 9.400H1z' fill='#b8b8b8' stroke='#7a7a7a' stroke-width='.7'/><circle cx='5.400' cy='5.200' r='1.800' fill='#e6e6e6' stroke='#6a6a6a' stroke-width='.5'/></svg>
<svg style='left:646.60px;top:78.30px' width='11.4' height='11.4' viewBox='0 0 11 11'><path d='M1 3l3-1.800h6v6.400L7 9.400H1z' fill='#d2d2d2' stroke='#b0b0b0' stroke-width='.7'/><rect x='5.600' y='3.600' width='2.600' height='4' fill='#b0b0b0'/></svg>
<svg style='left:663.30px;top:78.30px' width='11.4' height='11.4' viewBox='0 0 11 11'><path d='M1.400 3h5.200c2 0 2 2.600 0 2.600H4.400c-2 0-2 2.800 0 2.800h5' fill='none' stroke='#111' stroke-width='.8' stroke-dasharray='1.600 .7'/><path d='M1.800 1.600L.2 3l1.600 1.400zM9 7l1.800 1.400L9 9.800z' fill='#111'/></svg>
<svg style='left:681.80px;top:78.30px' width='11.4' height='11.4' viewBox='0 0 11 11'><path d='M1 5.800L5.500 1.600 10 5.800' fill='none' stroke='#cfcfcf' stroke-width='.9'/><path d='M2.400 5.600L5.500 2.800l3.100 2.800v4.600H2.400z' fill='#f2f2f2' stroke='#cfcfcf' stroke-width='.6'/><rect x='4.600' y='7' width='1.800' height='3.200' fill='#d9d9d9'/></svg>
<div class='a' style='left:698.0px;top:77.0px;width:1.2px;height:14px;background:#cdcdcd'></div>
<svg style='left:703.80px;top:78.30px' width='11.4' height='11.4' viewBox='0 0 11 11'><path d='M1 .6c0 5 3.400 9 9.400 9M3.200 .6c0 3.600 2.600 6.800 7.200 6.800M5.400 .6c0 2.600 1.800 4.600 5 4.600M7.600 .6c0 1.400 1 2.400 2.800 2.400' fill='none' stroke='#2a46e0' stroke-width='.9'/></svg>
<svg style='left:719.00px;top:78.30px' width='11.4' height='11.4' viewBox='0 0 11 11'><rect x='1.600' y='2.600' width='8.400' height='5.600' fill='#c9d6ff' stroke='#1c2ec8' stroke-width='1.100'/><path d='M3 7l5.600-3.600' stroke='#fff' stroke-width='.7' stroke-dasharray='1.200 .6'/><path d='M.2 10.200L10.800 1' stroke='#111' stroke-width='.9'/></svg>
<svg style='left:733.9px;top:83.2px' width='4' height='3' viewBox='0 0 4 3'><path d='M0 0h4L2 2.400z' fill='#222'/></svg>
<svg style='left:742.50px;top:78.30px' width='11.4' height='11.4' viewBox='0 0 11 11'><path d='M2.600 .8v8l2-1.800 1.200 2.800 1.200-.6L5.800 6.400h2.600z' fill='#fff' stroke='#111' stroke-width='.7'/><path d='M7.600 1v9.600M5.600 3h5M5.600 8.200h5' stroke='#333' stroke-width='.6' stroke-dasharray='1 .8'/></svg>
<svg style='left:760.10px;top:78.30px' width='11.4' height='11.4' viewBox='0 0 11 11'><path d='M1 9.800h9.200V3' fill='none' stroke='#222' stroke-width='.8'/><path d='M2 2.400h2.400M6 2.400h2.400' stroke='#222' stroke-width='.8' stroke-dasharray='1 .6'/><text x='1.600' y='8.600' font-family='Liberation Sans' font-size='4.400' fill='#333'>1.0</text></svg>
<div class='a' style='left:776.6px;top:77.0px;width:1.2px;height:14px;background:#cdcdcd'></div>
<svg style='left:782.10px;top:78.30px' width='11.4' height='11.4' viewBox='0 0 11 11'><rect x='.5' y='.5' width='10' height='10' fill='#f3f0de' stroke='#1c1c96' stroke-width='1'/><path d='M2.400 8.800V4.600l3-2.400 3 2.400v4.200z' fill='#f2e6a8' stroke='#6a5a1a' stroke-width='.5'/><circle cx='5.400' cy='6.200' r='1.400' fill='#fff' stroke='#555' stroke-width='.5'/></svg>
<svg style='left:799.70px;top:78.30px' width='11.4' height='11.4' viewBox='0 0 11 11'><rect x='.5' y='.5' width='10' height='10' fill='#f3f0de' stroke='#1c1c96' stroke-width='1'/><path d='M1.800 9.200V5.200L5.500 2l3.700 3.200v4' fill='none' stroke='#8a5a10' stroke-width='1.100'/><path d='M3 9V5.600L5.500 3.400 8 5.600V9z' fill='#fff6c0'/></svg>
<svg style='left:817.30px;top:78.30px' width='11.4' height='11.4' viewBox='0 0 11 11'><rect x='.5' y='.5' width='10' height='10' fill='#f3f0de' stroke='#1c1c96' stroke-width='1'/><path d='M2 5.400L5.500 2.600 9 5.400z' fill='#e03a2a'/><rect x='2.600' y='5.400' width='5.800' height='3.600' fill='#f0e0b0' stroke='#6a5a3a' stroke-width='.5'/><path d='M5.500 1.400v1.600' stroke='#e03a2a' stroke-width='.8'/></svg>
<svg style='left:835.50px;top:78.30px' width='11.4' height='11.4' viewBox='0 0 11 11'><rect x='.5' y='.5' width='10' height='10' fill='#f3f0de' stroke='#1c1c96' stroke-width='1'/><rect x='2.600' y='2' width='5.800' height='7' fill='#fff' stroke='#222' stroke-width='.7'/><rect x='3.600' y='3.200' width='2.600' height='4.600' fill='#d86a4a'/></svg>
<svg style='left:853.10px;top:78.30px' width='11.4' height='11.4' viewBox='0 0 11 11'><rect x='.5' y='.5' width='10' height='10' fill='#f3f0de' stroke='#1c1c96' stroke-width='1'/><path d='M2 6c0-2.400 7-2.400 7 0v3H2z' fill='#e8d8a8' stroke='#6a5a3a' stroke-width='.6'/><path d='M2.600 7.400h5.800' stroke='#6a5a3a' stroke-width='.6'/></svg>
<svg style='left:870.10px;top:78.30px' width='11.4' height='11.4' viewBox='0 0 11 11'><rect x='.5' y='.5' width='10' height='10' fill='#f3f0de' stroke='#1c1c96' stroke-width='1'/><rect x='2.400' y='2.200' width='6.200' height='6.600' fill='#f2e6a8' stroke='#222' stroke-width='.8'/><path d='M8.600 2.200v6.600' stroke='#111' stroke-width='1.400'/></svg>
<svg style='left:887.70px;top:78.30px' width='11.4' height='11.4' viewBox='0 0 11 11'><rect x='.5' y='.5' width='10' height='10' fill='#f3f0de' stroke='#1c1c96' stroke-width='1'/><path d='M1.800 5.800L5.500 2.400l3.700 3.400' fill='none' stroke='#8a5a10' stroke-width='.9'/><path d='M3 5.600L5.500 3.400 8 5.600v3.600H3z' fill='#fff6c0' stroke='#8a6a1a' stroke-width='.5'/><rect x='4.600' y='6.600' width='1.800' height='2.600' fill='#e8b81c'/></svg>
<svg style='left:263.6px;top:83.4px' width='4' height='3' viewBox='0 0 4 3'><path d='M0 0h4L2 2.400z' fill='#222'/></svg>
<div class='a' style='left:436.2px;top:75.6px;width:33px;height:16.6px;background:#fff;border:.7px solid #c2c2c2'></div>
<div class='t ' style='left:438.2px;top:78.45px;'>27,5</div>
<svg style='left:459.4px;top:76.4px' width='9' height='15' viewBox='0 0 9 15'><rect x='.3' y='.3' width='8.400' height='14.400' fill='#f0f0f0' stroke='#dcdcdc' stroke-width='.5'/><path d='M2.600 5.200h3.800L4.500 2.800zM2.600 9.600h3.800L4.500 12z' fill='#222'/></svg>
<div class='a' style='left:0;top:544.7px;width:1296px;height:83px;background:rgba(181,105,2,.62)'></div>
<div class='a' style='left:76.3px;top:562.6px;font-size:44px;line-height:52px;color:#fff;white-space:nowrap;letter-spacing:-0.925px'>Die </div>
<div class='a' style='left:149.6px;top:562.6px;font-size:44px;line-height:52px;color:#fff;white-space:nowrap;letter-spacing:0.354px'>Ansichtsfenster </div>
<div class='a' style='left:461.4px;top:562.6px;font-size:44px;line-height:52px;color:#fff;white-space:nowrap;letter-spacing:1.079px'>der </div>
<div class='a' style='left:536.6px;top:562.6px;font-size:44px;line-height:52px;color:#fff;white-space:nowrap;letter-spacing:0.177px'>Baustatik </div>
<div class='a' style='left:1072px;top:28px;width:201px;height:97.5px;background:#fff;border:1px solid #7d7d7d'></div>
<div class='a' style='left:1227.7px;top:84.6px;width:14px;height:13.5px;background:#e2001a'></div>
<div class='a' id='lgd' style='left:1105.8px;top:25.8px;font-size:77.6px;line-height:90px;height:90px;color:#0a0a0a;white-space:nowrap;transform-origin:0 0;transform:scaleX(1.30);-webkit-text-stroke:1.6px #fff'>d</div>
<div class='a' id='lgi' style='left:1156.6px;top:25.8px;font-size:77.6px;line-height:90px;height:90px;color:#0a0a0a;white-space:nowrap;transform-origin:0 0;transform:scaleX(1.30);-webkit-text-stroke:1.6px #fff'>i</div>
<div class='a' id='lge' style='left:1170.8px;top:25.8px;font-size:77.6px;line-height:90px;height:90px;color:#0a0a0a;white-space:nowrap;transform-origin:0 0;transform:scaleX(1.30);-webkit-text-stroke:1.6px #fff'>e</div>
<div class='a' id='lg2' style='left:1110.2px;top:96.8px;font-size:16.3px;line-height:20px;height:20px;color:#161616;white-space:nowrap'>baustatik software</div>
</body></html>
